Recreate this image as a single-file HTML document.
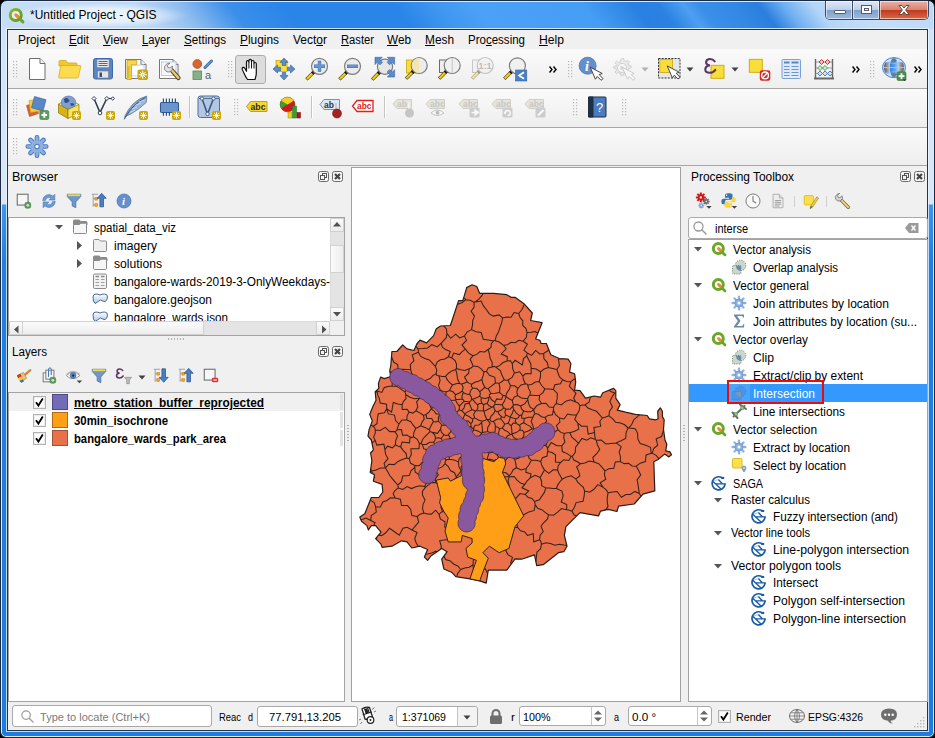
<!DOCTYPE html>
<html><head><meta charset="utf-8"><title>QGIS</title>
<style>
*{box-sizing:border-box;margin:0;padding:0}
html,body{width:935px;height:738px;overflow:hidden}
body{position:relative;font-family:"Liberation Sans",sans-serif;font-size:12px;color:#000;background:#000}
.abs{position:absolute}
#frame{left:0;top:0;width:935px;height:738px;border-radius:7px 7px 6px 6px;background:linear-gradient(#cfe2f6 0,#d8e7f8 203px,#3f95f0 204px,#1f7fe4 262px,#1c7ce2 100%);border:1px solid #1b2a40;box-shadow:inset 0 0 0 1px #d8ecfb}
#title{left:2px;top:2px;width:931px;height:27px;border-radius:5px 5px 0 0;background:linear-gradient(52deg,#c6ddf5 8.3px,#bfd9f5 118.6px,#8fbdf0 154.1px,#3a8fea 193.5px,#2a85e8 236.8px,#2a85e8 323.5px,#3f96f0 355.0px,#4ba1f6 386.6px,#469df4 473.2px,#2a80e0 512.6px,#2b82e2 532.3px,#4d9ff2 552.0px,#3a8fe8 563.9px,#3388e4 591.4px,#2a7edd 611.1px,#6fb0f2 630.8px,#b4d5f7 654.5px,#c4def8 693.9px,#bcd9f6 741.9px)}
#glow{left:8px;top:3px;width:180px;height:25px;background:radial-gradient(closest-side,rgba(255,255,255,.8) 0%,rgba(255,255,255,.6) 55%,rgba(255,255,255,0) 100%)}
#client{left:7px;top:29px;width:921px;height:702px;background:#f0f0f0;border:1px solid #26344a;box-shadow:0 0 0 1px rgba(235,245,255,.8)}
.t{position:absolute;white-space:nowrap;line-height:14px;transform-origin:0 50%}
.hd{width:5px;height:17px;background-image:radial-gradient(circle at 1px 1px,#b8b8b8 0.9px,transparent 1.1px);background-size:3px 3px}
#capbtns{left:825px;top:1px;width:104px;height:19px;border:1px solid #3a4a63;border-top:none;border-radius:0 0 5px 5px;overflow:hidden;display:flex}
.cb{height:18px;position:relative;border-right:1px solid #3a4a63;box-shadow:inset 0 0 0 1px rgba(255,255,255,.55)}
.cb.mn,.cb.mx{width:27px;background:linear-gradient(#dfe9f6 0%,#bccfe8 48%,#7f9fca 52%,#9dbbe0 100%)}
.cb.cl{width:48px;border-right:none;background:linear-gradient(#e9b2a5 0%,#d9836f 48%,#c13a1f 52%,#d96a44 100%)}
.cb.mn i{position:absolute;left:8px;top:9px;width:12px;height:4px;background:#fff;border:1px solid #535c6c;border-radius:1px}
.cb.mx i{position:absolute;left:8px;top:4px;width:11px;height:9px;border:1px solid #535c6c;background:#fff;box-shadow:inset 0 0 0 2px #fff,inset 0 0 0 3px #535c6c}
.cb.cl svg{position:absolute;left:17px;top:3px}
.sbv{width:14px;background:#e4e4e4;border-left:1px solid #dcdcdc}
.sbh{height:14px;background:#e4e4e4;border-top:1px solid #dcdcdc}
.sbb{position:absolute;width:14px;height:14px;background:linear-gradient(#fafafa,#ececec);border:1px solid #d0d0d0}
.sbv .sbb{left:-1px}.sbh .sbb{top:-1px}
.sbt{position:absolute;left:-1px;width:14px;background:linear-gradient(90deg,#fbfbfb,#ededed);border:1px solid #d2d2d2}
.sbt2{position:absolute;top:-1px;height:14px;background:linear-gradient(#fbfbfb,#ededed);border:1px solid #d2d2d2}
u{text-decoration:underline}
#t1{transform:scaleX(0.9983)}
#t2{transform:scaleX(0.9900)}
#t3{transform:scaleX(0.9660)}
#t4{transform:scaleX(0.9685)}
#t5{transform:scaleX(0.9324)}
#t6{transform:scaleX(0.9683)}
#t7{transform:scaleX(0.9905)}
#t8{transform:scaleX(0.9986)}
#t9{transform:scaleX(0.9333)}
#t10{transform:scaleX(0.9808)}
#t11{transform:scaleX(0.9878)}
#t12{transform:scaleX(0.9600)}
#t13{transform:scaleX(1.0127)}
#t14{transform:scaleX(1.0451)}
#t15{transform:scaleX(0.9528)}
#t16{transform:scaleX(1.0073)}
#t17{transform:scaleX(1.0132)}
#t18{transform:scaleX(0.9853)}
#t19{transform:scaleX(0.9924)}
#t20{transform:scaleX(0.9709)}
#t21{transform:scaleX(0.9714)}
#t22{transform:scaleX(0.9893)}
#t23{transform:scaleX(0.9524)}
#t24{transform:scaleX(0.9377)}
#t25{transform:scaleX(0.9919)}
#t26{transform:scaleX(0.9159)}
#t27{transform:scaleX(0.9663)}
#t28{transform:scaleX(0.9581)}
#t29{transform:scaleX(0.9820)}
#t30{transform:scaleX(1.0043)}
#t31{transform:scaleX(0.9914)}
#t32{transform:scaleX(0.9862)}
#t33{transform:scaleX(1.0159)}
#t34{transform:scaleX(0.9935)}
#t35{transform:scaleX(0.9992)}
#t36{transform:scaleX(0.9851)}
#t37{transform:scaleX(0.9915)}
#t38{transform:scaleX(0.9893)}
#t39{transform:scaleX(0.9887)}
#t40{transform:scaleX(0.8993)}
#t41{transform:scaleX(0.9630)}
#t42{transform:scaleX(0.9761)}
#t43{transform:scaleX(0.9325)}
#t44{transform:scaleX(1.0193)}
#t45{transform:scaleX(1.0178)}
#t46{transform:scaleX(0.9776)}
#t47{transform:scaleX(1.0097)}
#t48{transform:scaleX(1.0172)}
#t49{transform:scaleX(1.0023)}
#t50{transform:scaleX(0.8564)}
#t51{transform:scaleX(0.8163)}
#t52{transform:scaleX(1.0233)}
#t53{transform:scaleX(0.6531)}
#t54{transform:scaleX(0.9588)}
#t55{transform:scaleX(1.0894)}
#t56{transform:scaleX(0.9808)}
#t57{transform:scaleX(0.8163)}
#t58{transform:scaleX(1.0637)}
#t59{transform:scaleX(0.9701)}
#t60{transform:scaleX(0.9467)}
</style></head><body>
<div id="frame" class="abs"></div>
<div id="title" class="abs"></div>
<div id="glow" class="abs"></div>
<div id="client" class="abs"></div>
<svg class="abs" style="left:7.5px;top:6.5px;overflow:visible" width="17" height="17" viewBox="0 0 16 16"><defs><linearGradient id="qg" x1="0" y1="0" x2="1" y2="1"><stop offset="0" stop-color="#8ab82a"/><stop offset="1" stop-color="#5f9a1a"/></linearGradient></defs><circle cx="7.300" cy="7.500" r="5.200" fill="#e4eef8" stroke="url(#qg)" stroke-width="2.800"/><path d="M8 8l6 6" stroke="#6aa428" stroke-width="2.800" stroke-linecap="round"/><path d="M7.300 7.300l2.200 2.200" stroke="#ee8a2a" stroke-width="2.600" stroke-linecap="round"/></svg>
<span id="t1" class="t" style="left:29.5px;top:8.0px;font-size:12px;">*Untitled Project - QGIS</span>
<div class="abs" id="capbtns"><div class="cb mn"><i></i></div><div class="cb mx"><i></i></div><div class="cb cl"><svg width="14" height="12" viewBox="0 0 14 12"><path d="M2 1.5h3l2 2.6 2-2.6h3L8.6 6 12 10.5H9L7 7.9 5 10.5H2L5.4 6z" fill="#fff" stroke="#53403c" stroke-width="0.9"/></svg></div></div>
<span id="t2" class="t" style="left:18px;top:32.5px;font-size:12px;">Pro<u>j</u>ect</span>
<span id="t3" class="t" style="left:69px;top:32.5px;font-size:12px;"><u>E</u>dit</span>
<span id="t4" class="t" style="left:103px;top:32.5px;font-size:12px;"><u>V</u>iew</span>
<span id="t5" class="t" style="left:142px;top:32.5px;font-size:12px;"><u>L</u>ayer</span>
<span id="t6" class="t" style="left:184px;top:32.5px;font-size:12px;"><u>S</u>ettings</span>
<span id="t7" class="t" style="left:240px;top:32.5px;font-size:12px;"><u>P</u>lugins</span>
<span id="t8" class="t" style="left:293px;top:32.5px;font-size:12px;">Vect<u>o</u>r</span>
<span id="t9" class="t" style="left:341px;top:32.5px;font-size:12px;"><u>R</u>aster</span>
<span id="t10" class="t" style="left:387px;top:32.5px;font-size:12px;"><u>W</u>eb</span>
<span id="t11" class="t" style="left:425px;top:32.5px;font-size:12px;"><u>M</u>esh</span>
<span id="t12" class="t" style="left:468px;top:32.5px;font-size:12px;">Pro<u>c</u>essing</span>
<span id="t13" class="t" style="left:539px;top:32.5px;font-size:12px;"><u>H</u>elp</span>
<div class="abs" style="left:8px;top:49px;width:919px;height:1px;background:#fafafa"></div>
<div class="abs" style="left:8px;top:50px;width:919px;height:38px;background:linear-gradient(#fafafa,#eeeeee)"></div>
<div class="abs" style="left:8px;top:89px;width:919px;height:38px;background:linear-gradient(#fafafa,#eeeeee)"></div>
<div class="abs" style="left:8px;top:128px;width:919px;height:37px;background:linear-gradient(#fafafa,#eeeeee)"></div>
<div class="abs" style="left:8px;top:88px;width:919px;height:1px;background:#a6a6a6"></div>
<div class="abs" style="left:8px;top:127px;width:919px;height:1px;background:#a6a6a6"></div>
<div class="abs" style="left:8px;top:165px;width:919px;height:1px;background:#a6a6a6"></div>
<svg class="abs" style="left:13px;top:61px" width="5" height="17" viewBox="0 0 5 17"><g fill="#b9b9b9"><rect x="0" y="0" width="1.2" height="1.2"/><rect x="0" y="3" width="1.2" height="1.2"/><rect x="0" y="6" width="1.2" height="1.2"/><rect x="0" y="9" width="1.2" height="1.2"/><rect x="0" y="12" width="1.2" height="1.2"/><rect x="0" y="15" width="1.2" height="1.2"/><rect x="3" y="0" width="1.2" height="1.2"/><rect x="3" y="3" width="1.2" height="1.2"/><rect x="3" y="6" width="1.2" height="1.2"/><rect x="3" y="9" width="1.2" height="1.2"/><rect x="3" y="12" width="1.2" height="1.2"/><rect x="3" y="15" width="1.2" height="1.2"/></g></svg>
<svg class="abs" style="left:25.0px;top:57.0px;overflow:visible" width="24" height="24" viewBox="0 0 24 24"><path d="M4.5 1.5h10.5l5 5v16h-15.500z" fill="#fff" stroke="#6e6e6e"/><path d="M15 1.5v5h5" fill="#f2f2f2" stroke="#6e6e6e"/></svg>
<svg class="abs" style="left:57.0px;top:57.0px;overflow:visible" width="24" height="24" viewBox="0 0 24 24"><path d="M2 4.500q0-1 1-1h6l2 2.500h8q1 0 1 1v2H2z" fill="#f0c830" stroke="#d4a910" stroke-width=".8"/><path d="M3.800 8.500h19.200q1 0 .8 1L21.300 20q-.2 1-1.200 1H2.500q-1 0-.8-1z" fill="#fcdb4e" stroke="#d9ae18" stroke-width=".8"/></svg>
<svg class="abs" style="left:91.0px;top:57.0px;overflow:visible" width="24" height="24" viewBox="0 0 24 24"><rect x="2.500" y="1.500" width="19" height="20.500" rx="2" fill="#5b86c4" stroke="#3b6aae"/><rect x="6" y="2.500" width="12" height="8" fill="#e9e9e9" stroke="#8a8a8a" stroke-width=".6"/><path d="M7.500 4.500h9M7.500 6.500h9M7.500 8.500h9" stroke="#555" stroke-width=".9"/><rect x="6.500" y="14" width="11" height="7" fill="#e4e4e4" stroke="#777" stroke-width=".6"/><rect x="8.500" y="15.500" width="2.500" height="4.500" fill="#35507c"/></svg>
<svg class="abs" style="left:124.0px;top:57.0px;overflow:visible" width="24" height="24" viewBox="0 0 24 24"><path d="M1.500 2.500h15.500l5 5v14h-20.500z" fill="#fff" stroke="#777"/><path d="M17 2.500v5h5" fill="#eee" stroke="#777"/><path d="M7.500 8h12.500v11h-12.500z" fill="none" stroke="#c4d0f0" stroke-width="1"/><path d="M3 3.300h9.700v4.500h-5.400v14.700h-4.300z" fill="#f8d648" stroke="#c9a010" stroke-width=".8"/><path d="M3.500 10h2M3.500 12h2M3.500 14h2M3.500 16h2M3.500 18h2M3.500 20h2" stroke="#b08a08" stroke-width=".7"/><rect x="13.500" y="12.500" width="10.500" height="10.500" rx="2" fill="#c9a80c"/><circle cx="18.750" cy="17.750" r="1.600" fill="#fff"/><path d="M18.750 13.700v8.100M14.700 17.750h8.100M15.900 14.900l5.700 5.700M15.900 20.600l5.700-5.700" stroke="#fff" stroke-width="1"/><circle cx="18.750" cy="17.750" r=".700" fill="#c9a80c"/></svg>
<svg class="abs" style="left:157.0px;top:57.0px;overflow:visible" width="24" height="24" viewBox="0 0 24 24"><path d="M2.500 2.500h13.500l5 5v14h-18.500z" fill="#fff" stroke="#777"/><path d="M16 2.500v5h5" fill="#eee" stroke="#777"/><rect x="4.500" y="5" width="14.500" height="13.500" fill="#f6f8fe" stroke="#b9c5ee" stroke-width=".9"/><path d="M14.500 13L21.500 21" stroke="#4a4232" stroke-width="4.200" stroke-linecap="round"/><path d="M14.800 13.300L21.300 20.800" stroke="#e9cc72" stroke-width="2.500" stroke-linecap="round"/><path d="M8.600 8.200a4 4 0 1 0 6.800 2.600l.2-1.800-2.800 2-2-.7-.4-2.100 2.600-2a4 4 0 0 0-4.400 2z" fill="#e2e2e2" stroke="#707070" stroke-width=".8" stroke-linejoin="round"/></svg>
<svg class="abs" style="left:190.0px;top:57.0px;overflow:visible" width="24" height="24" viewBox="0 0 24 24"><circle cx="7.300" cy="7" r="4.400" fill="#d8642e" stroke="#a8441a" stroke-width=".7"/><path d="M15 10.500L21.500 4" stroke="#2f5f9a" stroke-width="3" stroke-linecap="round"/><path d="M15 10.500L21.500 4" stroke="#5b8fd0" stroke-width="1.800" stroke-linecap="round"/><rect x="3" y="14" width="8.500" height="8.500" fill="#86b086" stroke="#5a8a5a" stroke-width=".8"/><text x="15" y="22" font-family="Liberation Sans" font-size="11" fill="#5a5a5a">a</text></svg>
<svg class="abs" style="left:228px;top:61px" width="5" height="17" viewBox="0 0 5 17"><g fill="#b9b9b9"><rect x="0" y="0" width="1.2" height="1.2"/><rect x="0" y="3" width="1.2" height="1.2"/><rect x="0" y="6" width="1.2" height="1.2"/><rect x="0" y="9" width="1.2" height="1.2"/><rect x="0" y="12" width="1.2" height="1.2"/><rect x="0" y="15" width="1.2" height="1.2"/><rect x="3" y="0" width="1.2" height="1.2"/><rect x="3" y="3" width="1.2" height="1.2"/><rect x="3" y="6" width="1.2" height="1.2"/><rect x="3" y="9" width="1.2" height="1.2"/><rect x="3" y="12" width="1.2" height="1.2"/><rect x="3" y="15" width="1.2" height="1.2"/></g></svg>
<div class="abs" style="left:235px;top:55px;width:31px;height:29px;border:1px solid #adadad;background:#dddddd;border-radius:3px"></div>
<svg class="abs" style="left:239.0px;top:57.0px;overflow:visible" width="24" height="24" viewBox="0 0 24 24"><path d="M8.500 22.500q-1.800-2.400-3.500-6.300-1.300-2.800-1.700-3.800-.5-1.600.7-2 1-.3 1.900 1.100l1.600 2.800V5q0-1.400 1.200-1.400T9.900 5V3.700q0-1.400 1.300-1.400t1.300 1.400v1q.1-1.300 1.300-1.200t1.200 1.400v1.600q.2-1.100 1.200-1t1.100 1.300V16q0 2.600-.7 4.300l-.6 2.200z" fill="#fff" stroke="#111" stroke-width="1.200" stroke-linejoin="round"/><path d="M9.900 5v6.500M12.500 4.700V11.500M15 6.500v5" stroke="#111" stroke-width="1" fill="none"/></svg>
<svg class="abs" style="left:272.0px;top:57.0px;overflow:visible" width="24" height="24" viewBox="0 0 24 24"><rect x="4" y="3.500" width="11" height="11" fill="#f9de3a" stroke="#c9a60e" stroke-width=".8"/><g fill="#5e8cc8" stroke="#3568a8" stroke-width=".7" stroke-linejoin="round"><path d="M12 1l4 4.500h-2.300v3h-3.400v-3H8z"/><path d="M12 23l4-4.500h-2.300v-3h-3.400v3H8z"/><path d="M1 12l4.500-4v2.300h3v3.400h-3V16z"/><path d="M23 12l-4.500-4v2.300h-3v3.400h3V16z"/></g><rect x="9.800" y="9.800" width="4.400" height="4.400" fill="#f9de3a"/></svg>
<svg class="abs" style="left:305.0px;top:57.0px;overflow:visible" width="24" height="24" viewBox="0 0 24 24"><g opacity="1"><path d="M9.2 14.6L1.4 22.4" stroke="#4a3d10" stroke-width="3.4"/><path d="M9.2 14.6L7.2 16.6" stroke="#1a1a1a" stroke-width="3.4"/><path d="M7.2 16.6L1.8 22.0" stroke="#f6c917" stroke-width="2.3"/><circle cx="14.5" cy="9.3" r="8" fill="#ebebeb" stroke="#7d7d7d" stroke-width="1.2"/><path d="M14.500 3.800v11M9 9.300h11" stroke="#3f6fb0" stroke-width="3.400"/><path d="M14.500 4.300v10M9.500 9.300h10" stroke="#6a96d0" stroke-width="2.400"/></g></svg>
<svg class="abs" style="left:338.0px;top:57.0px;overflow:visible" width="24" height="24" viewBox="0 0 24 24"><g opacity="1"><path d="M9.2 14.6L1.4 22.4" stroke="#4a3d10" stroke-width="3.4"/><path d="M9.2 14.6L7.2 16.6" stroke="#1a1a1a" stroke-width="3.4"/><path d="M7.2 16.6L1.8 22.0" stroke="#f6c917" stroke-width="2.3"/><circle cx="14.5" cy="9.3" r="8" fill="#ebebeb" stroke="#7d7d7d" stroke-width="1.2"/><path d="M9 9.300h11" stroke="#3f6fb0" stroke-width="3.400"/><path d="M9.500 9.300h10" stroke="#6a96d0" stroke-width="2.400"/></g></svg>
<svg class="abs" style="left:371.0px;top:57.0px;overflow:visible" width="24" height="24" viewBox="0 0 24 24"><g opacity="1"><path d="M9.0 14.8L1.2 22.6" stroke="#4a3d10" stroke-width="3.4"/><path d="M9.0 14.8L7.0 16.8" stroke="#1a1a1a" stroke-width="3.4"/><path d="M7.0 16.8L1.6 22.2" stroke="#f6c917" stroke-width="2.3"/><circle cx="14" cy="9.8" r="7.6" fill="#e6e6e6" stroke="#7d7d7d" stroke-width="1.2"/></g><g fill="#5a8cce" stroke="#3465a4" stroke-width=".6" stroke-linejoin="round"><path d="M4 .3h7.300l-2.400 2.400 2.600 2.600-2.500 2.500-2.600-2.600L4 7.600z"/><path d="M23.600 .3h-7.300l2.400 2.400-2.600 2.600 2.500 2.500 2.600-2.600 2.400 2.400z"/><path d="M23.600 20h-7.300l2.400-2.400-2.600-2.600 2.500-2.500 2.600 2.600 2.400-2.400z"/></g></svg>
<svg class="abs" style="left:404.0px;top:57.0px;overflow:visible" width="24" height="24" viewBox="0 0 24 24"><rect x="2.500" y="3" width="11" height="13" fill="#f9de3a" stroke="#c9a60e" stroke-width=".8"/><g opacity="1"><path d="M9.9 13.8L2.1 21.6" stroke="#4a3d10" stroke-width="3.4"/><path d="M9.9 13.8L7.9 15.8" stroke="#1a1a1a" stroke-width="3.4"/><path d="M7.9 15.8L2.5 21.2" stroke="#f6c917" stroke-width="2.3"/><circle cx="15.2" cy="8.5" r="8" fill="#ececec" stroke="#7d7d7d" stroke-width="1.2"/><path d="M15.200 1.100a7.400 7.400 0 0 0 0 14.800z" fill="#f0e6b4"/></g></svg>
<svg class="abs" style="left:437.0px;top:57.0px;overflow:visible" width="24" height="24" viewBox="0 0 24 24"><rect x="2.500" y="3" width="10" height="12.500" fill="#ededed" stroke="#6a6a6a" stroke-width="1"/><g opacity="1"><path d="M9.9 13.8L2.1 21.6" stroke="#4a3d10" stroke-width="3.4"/><path d="M9.9 13.8L7.9 15.8" stroke="#1a1a1a" stroke-width="3.4"/><path d="M7.9 15.8L2.5 21.2" stroke="#f6c917" stroke-width="2.3"/><circle cx="15.2" cy="8.5" r="8" fill="#f0f0f0" stroke="#7d7d7d" stroke-width="1.2"/><path d="M15.200 1.500v14" stroke="#c4c4c4" stroke-width="1"/></g></svg>
<svg class="abs" style="left:470.0px;top:57.0px;overflow:visible" width="24" height="24" viewBox="0 0 24 24"><g opacity=".42"><rect x="2.500" y="3" width="10" height="12.500" fill="#eee" stroke="#888" stroke-width="1"/><g opacity="1"><path d="M9.9 13.8L2.1 21.6" stroke="#4a3d10" stroke-width="3.4"/><path d="M9.9 13.8L7.9 15.8" stroke="#1a1a1a" stroke-width="3.4"/><path d="M7.9 15.8L2.5 21.2" stroke="#f6c917" stroke-width="2.3"/><circle cx="15.2" cy="8.5" r="8" fill="#eee" stroke="#7d7d7d" stroke-width="1.2"/><text x="8.600" y="12" font-family="Liberation Sans" font-weight="bold" font-size="9.500" fill="#6a6a6a" textLength="13" lengthAdjust="spacingAndGlyphs">1:1</text></g></g></svg>
<svg class="abs" style="left:503.0px;top:57.0px;overflow:visible" width="24" height="24" viewBox="0 0 24 24"><g opacity="1"><path d="M9.1 14.1L1.3 21.9" stroke="#4a3d10" stroke-width="3.4"/><path d="M9.1 14.1L7.1 16.1" stroke="#1a1a1a" stroke-width="3.4"/><path d="M7.1 16.1L1.7 21.5" stroke="#f6c917" stroke-width="2.3"/><circle cx="14.4" cy="8.8" r="8" fill="#f0f0f0" stroke="#7d7d7d" stroke-width="1.2"/></g><rect x="12.500" y="13" width="11.300" height="11" fill="#4c7fc2" stroke="#3465a4" stroke-width=".6"/><path d="M21 15.200l-5 3.300 5 3.300" fill="none" stroke="#fff" stroke-width="1.700"/></svg>
<svg class="abs" style="left:549px;top:66px" width="9" height="7" viewBox="0 0 9 7"><path d="M0.5 0.5L3 3.5 0.5 6.5M4.5 0.5L7 3.5 4.5 6.5" fill="none" stroke="#000" stroke-width="1.4"/></svg>
<svg class="abs" style="left:568px;top:61px" width="5" height="17" viewBox="0 0 5 17"><g fill="#b9b9b9"><rect x="0" y="0" width="1.2" height="1.2"/><rect x="0" y="3" width="1.2" height="1.2"/><rect x="0" y="6" width="1.2" height="1.2"/><rect x="0" y="9" width="1.2" height="1.2"/><rect x="0" y="12" width="1.2" height="1.2"/><rect x="0" y="15" width="1.2" height="1.2"/><rect x="3" y="0" width="1.2" height="1.2"/><rect x="3" y="3" width="1.2" height="1.2"/><rect x="3" y="6" width="1.2" height="1.2"/><rect x="3" y="9" width="1.2" height="1.2"/><rect x="3" y="12" width="1.2" height="1.2"/><rect x="3" y="15" width="1.2" height="1.2"/></g></svg>
<svg class="abs" style="left:578.0px;top:57.0px;overflow:visible" width="24" height="24" viewBox="0 0 24 24"><circle cx="9.600" cy="8.700" r="8.500" fill="#6390cc" stroke="#4674b6" stroke-width=".8"/><text x="6.900" y="13.700" font-family="Liberation Serif" font-style="italic" font-weight="bold" font-size="14" fill="#fff">i</text><path d="M12.2 10.2L24.2 16.5L21.2 17.6L25.1 21.6L23.0 23.3L19.3 19.5L17.4 22.2z" fill="#fff" stroke="#333" stroke-width=".9" stroke-linejoin="round"/></svg>
<svg class="abs" style="left:611.0px;top:57.0px;overflow:visible" width="24" height="24" viewBox="0 0 24 24"><g opacity=".4"><path d="M11 1.500l1.700.1.600 2.300 1.600.7 2.100-1.200 1.300 1.300-1.200 2.100.7 1.600 2.300.6v1.900l-2.300.6-.7 1.600 1.200 2.100-1.300 1.300-2.100-1.200-1.600.7-.6 2.300H9.800l-.6-2.300-1.600-.7-2.100 1.200-1.300-1.300 1.200-2.100-.7-1.600-2.300-.6V9.900l2.300-.6.700-1.600-1.200-2.100L5.500 4.300l2.100 1.200 1.600-.7.600-2.300z" fill="#ddd" stroke="#999" stroke-width="1"/><circle cx="11" cy="10.900" r="4.600" fill="#f4f4f4" stroke="#999"/><path d="M9.500 8.500v4.800l4-2.400z" fill="#aaa"/><path d="M11.2 10.2L23.2 16.5L20.2 17.6L24.1 21.6L22.0 23.3L18.3 19.5L16.4 22.2z" fill="#fff" stroke="#888" stroke-width=".9" stroke-linejoin="round"/></g></svg>
<svg class="abs" style="left:641px;top:67px" width="8" height="5" viewBox="0 0 8 5"><path d="M0.5 0.5h7L4 4.5z" fill="#b0b0b0"/></svg>
<svg class="abs" style="left:657.0px;top:57.0px;overflow:visible" width="24" height="24" viewBox="0 0 24 24"><rect x="1.500" y="1.500" width="21.500" height="19.500" fill="#e6e6e6" stroke="#333" stroke-width="1" stroke-dasharray="2 1.200"/><rect x="2.800" y="2.600" width="12.800" height="12.800" fill="#f9de3a" stroke="#c9a60e" stroke-width=".8"/><path d="M10.2 8.9L22.2 15.2L19.2 16.3L23.1 20.3L21.0 22.0L17.3 18.2L15.4 20.9z" fill="#fff" stroke="#333" stroke-width=".9" stroke-linejoin="round"/></svg>
<svg class="abs" style="left:686px;top:67px" width="8" height="5" viewBox="0 0 8 5"><path d="M0.5 0.5h7L4 4.5z" fill="#404040"/></svg>
<svg class="abs" style="left:701.0px;top:57.0px;overflow:visible" width="24" height="24" viewBox="0 0 24 24"><rect x="10" y="8.300" width="13" height="13" fill="#f9de3a" stroke="#c9a60e" stroke-width=".9"/><path transform="translate(2.300 -.5)" d="M11.500 4.800Q9.500 2.300 6.300 2.500 2.800 2.900 2.800 5.800 2.800 8.500 6.500 8.900 2 9.500 2 13 2 16.300 6.500 16.300 10 16.300 12 13.300" fill="none" stroke="#5c3566" stroke-width="2.100" stroke-linecap="round"/></svg>
<svg class="abs" style="left:731px;top:67px" width="8" height="5" viewBox="0 0 8 5"><path d="M0.5 0.5h7L4 4.5z" fill="#404040"/></svg>
<svg class="abs" style="left:746.0px;top:57.0px;overflow:visible" width="24" height="24" viewBox="0 0 24 24"><rect x="3.300" y="2.300" width="13" height="13" fill="#f9de3a" stroke="#c9a60e" stroke-width=".9"/><rect x="13.800" y="13.200" width="10.500" height="10.500" rx="2" fill="#d42a2a"/><circle cx="19" cy="18.450" r="3.400" fill="none" stroke="#fff" stroke-width="1.400"/><path d="M16.700 20.700l4.600-4.600" stroke="#fff" stroke-width="1.400"/></svg>
<svg class="abs" style="left:779.0px;top:57.0px;overflow:visible" width="24" height="24" viewBox="0 0 24 24"><rect x="3" y="2.500" width="18.500" height="19" rx="1" fill="#dfeaf8" stroke="#7ba0d4" stroke-width="1"/><path d="M5 5.500h5.500M12.500 5.500h7" stroke="#5886c6" stroke-width="2.200"/><path d="M5 9.500h5.500M12.500 9.500h7M5 12.500h5.500M12.500 12.500h7M5 15.500h5.500M12.500 15.500h7M5 18.500h5.500M12.500 18.500h7" stroke="#6a96d2" stroke-width="1.200"/></svg>
<svg class="abs" style="left:812.0px;top:57.0px;overflow:visible" width="24" height="24" viewBox="0 0 24 24"><path d="M3.500 2v19M20.500 2v19" stroke="#666" stroke-width="1.400"/><path d="M2 21.500h20" stroke="#666" stroke-width="2"/><path d="M3.500 5h17M3.500 11h17M3.500 16.500h17" stroke="#888" stroke-width=".8"/><g stroke-width=".9"><path d="M9.500 2.500l2.500 2.500-2.500 2.500L7 5zM15.500 2.500L18 5l-2.500 2.500L13 5z" fill="#f1c4c4" stroke="#c02020"/><path d="M8 8.500l2.500 2.500L8 13.500 5.500 11zM13 8.500l2.500 2.500-2.500 2.500-2.500-2.500z" fill="#cfe8cf" stroke="#4a9a4a"/><path d="M8 14l2.500 2.500L8 19l-2.500-2.500zM13 14l2.500 2.500L13 19l-2.500-2.500zM18 14l2.500 2.500L18 19l-2.500-2.500z" fill="#cfdff2" stroke="#3f74b8"/></g></svg>
<svg class="abs" style="left:852px;top:66px" width="9" height="7" viewBox="0 0 9 7"><path d="M0.5 0.5L3 3.5 0.5 6.5M4.5 0.5L7 3.5 4.5 6.5" fill="none" stroke="#000" stroke-width="1.4"/></svg>
<svg class="abs" style="left:870px;top:61px" width="5" height="17" viewBox="0 0 5 17"><g fill="#b9b9b9"><rect x="0" y="0" width="1.2" height="1.2"/><rect x="0" y="3" width="1.2" height="1.2"/><rect x="0" y="6" width="1.2" height="1.2"/><rect x="0" y="9" width="1.2" height="1.2"/><rect x="0" y="12" width="1.2" height="1.2"/><rect x="0" y="15" width="1.2" height="1.2"/><rect x="3" y="0" width="1.2" height="1.2"/><rect x="3" y="3" width="1.2" height="1.2"/><rect x="3" y="6" width="1.2" height="1.2"/><rect x="3" y="9" width="1.2" height="1.2"/><rect x="3" y="12" width="1.2" height="1.2"/><rect x="3" y="15" width="1.2" height="1.2"/></g></svg>
<svg class="abs" style="left:882.0px;top:57.0px;overflow:visible" width="24" height="24" viewBox="0 0 24 24"><defs><linearGradient id="gb" x1="0" x2="1"><stop offset="0" stop-color="#2f7fe0"/><stop offset=".6" stop-color="#5aa4ee"/><stop offset="1" stop-color="#a9d0f8"/></linearGradient><linearGradient id="gg" x1="0" x2="1"><stop offset="0" stop-color="#5a5a5a"/><stop offset="1" stop-color="#c8c8c8"/></linearGradient><linearGradient id="gh" x1="1" x2="0"><stop offset="0" stop-color="#5a5a5a"/><stop offset="1" stop-color="#c8c8c8"/></linearGradient></defs><ellipse cx="12" cy="10.600" rx="11.500" ry="10" fill="#cfe3fa" stroke="#3d7fd6" stroke-width="1"/><ellipse cx="12" cy="10.600" rx="4.300" ry="9.800" fill="url(#gb)"/><path d="M3 5.500Q5.500 4.300 8 4.800Q6.800 10.600 8 16.400Q5.500 16.900 3 15.700Q1 10.600 3 5.500z" fill="url(#gg)"/><path d="M21 5.500Q18.500 4.300 16 4.800Q17.200 10.600 16 16.400Q18.500 16.900 21 15.700Q23 10.600 21 5.500z" fill="url(#gh)"/><path d="M9.300 3.500Q12 -.5 14.700 3.500L13.800 5h-3.600zM9.300 17.700Q12 21.700 14.700 17.700L13.800 16.200h-3.600z" fill="#787878"/><path d="M.6 10.600h22.800" stroke="#a4caf6" stroke-width="1"/><path d="M2.500 5.200Q12 8 21.500 5.200M2.500 16Q12 13.200 21.500 16" fill="none" stroke="#8fbdf2" stroke-width=".6"/><rect x="15" y="14.800" width="9" height="8.700" rx="1.500" fill="#4f8f4f" stroke="#356c35" stroke-width=".6"/><path d="M19.500 16.300v5.700M16.600 19.100h5.800" stroke="#fff" stroke-width="1.800"/><path d="M20.500 22.500h4l-2 1.500z" fill="#2c2c2c"/></svg>
<svg class="abs" style="left:914px;top:66px" width="9" height="7" viewBox="0 0 9 7"><path d="M0.5 0.5L3 3.5 0.5 6.5M4.5 0.5L7 3.5 4.5 6.5" fill="none" stroke="#000" stroke-width="1.4"/></svg>
<svg class="abs" style="left:13px;top:99px" width="5" height="17" viewBox="0 0 5 17"><g fill="#b9b9b9"><rect x="0" y="0" width="1.2" height="1.2"/><rect x="0" y="3" width="1.2" height="1.2"/><rect x="0" y="6" width="1.2" height="1.2"/><rect x="0" y="9" width="1.2" height="1.2"/><rect x="0" y="12" width="1.2" height="1.2"/><rect x="0" y="15" width="1.2" height="1.2"/><rect x="3" y="0" width="1.2" height="1.2"/><rect x="3" y="3" width="1.2" height="1.2"/><rect x="3" y="6" width="1.2" height="1.2"/><rect x="3" y="9" width="1.2" height="1.2"/><rect x="3" y="12" width="1.2" height="1.2"/><rect x="3" y="15" width="1.2" height="1.2"/></g></svg>
<svg class="abs" style="left:25.0px;top:95.0px;overflow:visible" width="24" height="24" viewBox="0 0 24 24"><path d="M1.500 10.500l9-3 3 11-9 3z" fill="#d4623a" stroke="#a8482a" stroke-width=".6"/><path d="M4 5.500l10-1.500 1.500 12-10 1.500z" fill="#f4cc3a" stroke="#c9a010" stroke-width=".6"/><path d="M9.500 1.500l11.500 3.300L18 16 6.500 12.700z" fill="#5b88c4" stroke="#3b68a8" stroke-width=".7"/><rect x="14.800" y="15.500" width="9" height="9" rx="1.500" fill="#5e9a5e" stroke="#3f7a3f" stroke-width=".6"/><path d="M19.300 17.200v5.600M16.500 20h5.600" stroke="#fff" stroke-width="1.900"/></svg>
<svg class="abs" style="left:57.0px;top:95.0px;overflow:visible" width="24" height="24" viewBox="0 0 24 24"><ellipse cx="11.500" cy="7.500" rx="7.300" ry="6.500" fill="#7ea0d0" stroke="#4a6ea8" stroke-width=".6"/><path d="M7 4q2-1.500 4-.5l1.500 2.500-2.500 2-2.500-.5zM13 8.500l3-.5 1.500 2-3 1z" fill="#2f4f86"/><path d="M1.500 9l9.500 5.500v9L1.500 18z" fill="#d9b310" stroke="#8a7208" stroke-width=".7"/><path d="M11 14.500L22 9.500v8.500L11 23.500z" fill="#fbe45a" stroke="#8a7208" stroke-width=".7"/><path d="M1.500 9l3.500-1.600M22 9.500l-3.500-1.600" stroke="#8a7208" stroke-width=".7"/><rect x="15" y="16" width="9" height="9" rx="2" fill="#c9a80c"/><path d="M16.17 20.50L22.83 20.50M17.15 18.15L21.85 22.85M19.50 17.17L19.50 23.83M21.85 18.15L17.15 22.85" stroke="#fff" stroke-width="0.85"/></svg>
<svg class="abs" style="left:91.0px;top:95.0px;overflow:visible" width="24" height="24" viewBox="0 0 24 24"><path d="M3 3.500L9 17.500 15.800 3.500" fill="none" stroke="#2d3f55" stroke-width="1.600"/><path d="M15.800 3.500h5.500" stroke="#2d3f55" stroke-width="1.200"/><g fill="#fff" stroke="#2d3f55" stroke-width="1"><path d="M3 1.500l2 2-2 2-2-2zM15.800 1.500l2 2-2 2-2-2zM21.800 1.800l1.700 1.700-1.700 1.700-1.700-1.700z"/><circle cx="9" cy="18" r="1.800"/></g><rect x="15" y="16" width="9" height="9" rx="2" fill="#c9a80c"/><path d="M16.17 20.50L22.83 20.50M17.15 18.15L21.85 22.85M19.50 17.17L19.50 23.83M21.85 18.15L17.15 22.85" stroke="#fff" stroke-width="0.85"/></svg>
<svg class="abs" style="left:124.0px;top:95.0px;overflow:visible" width="24" height="24" viewBox="0 0 24 24"><defs><linearGradient id="fg" x1="0" y1="0" x2="1" y2="1"><stop offset="0" stop-color="#6388bd"/><stop offset=".55" stop-color="#9db6d8"/><stop offset="1" stop-color="#c9d7ea"/></linearGradient></defs><path d="M22.600 1.100Q15 3 9 9 3.500 15 1.200 20.500L.3 24.300 2.400 21Q4 20 6 19.500 15 14.500 22.200 7.500 23 4 22.600 1.100z" fill="url(#fg)" stroke="#47689c" stroke-width=".7" stroke-linejoin="round"/><path d="M21.500 2.500Q9 9 1 22.500" fill="none" stroke="#34507e" stroke-width="1"/><path d="M8 14l5-2M11 10.500l6-2.500M6 17.500l5-2.300M15 7l5.500-2" stroke="#e4ecf6" stroke-width=".7"/><rect x="15" y="16" width="9" height="9" rx="2" fill="#c9a80c"/><path d="M16.17 20.50L22.83 20.50M17.15 18.15L21.85 22.85M19.50 17.17L19.50 23.83M21.85 18.15L17.15 22.85" stroke="#fff" stroke-width="0.85"/></svg>
<svg class="abs" style="left:157.0px;top:95.0px;overflow:visible" width="24" height="24" viewBox="0 0 24 24"><rect x="3.500" y="7.500" width="18" height="10" rx="1.200" fill="#6a94cc" stroke="#2f5a94" stroke-width="1.100"/><path d="M6.400 3.500v4M9.400 3.500v4M12.400 3.500v4M15.400 3.500v4M18.400 3.500v4M6.400 17.500v3.300M9.400 17.500v3.300M12.400 17.500v3.300" stroke="#2d4f80" stroke-width="1.200"/><rect x="15" y="16" width="9" height="9" rx="2" fill="#c9a80c"/><path d="M16.17 20.50L22.83 20.50M17.15 18.15L21.85 22.85M19.50 17.17L19.50 23.83M21.85 18.15L17.15 22.85" stroke="#fff" stroke-width="0.85"/></svg>
<div class="abs" style="left:189px;top:96px;width:1px;height:22px;background:#c4c4c4"></div>
<div class="abs" style="left:190px;top:96px;width:1px;height:22px;background:#fff"></div>
<svg class="abs" style="left:197.0px;top:95.0px;overflow:visible" width="24" height="24" viewBox="0 0 24 24"><rect x="1" y="1" width="21.500" height="21.500" rx="2.500" fill="#b3c6e2" stroke="#4f6f9f" stroke-width="1"/><path d="M5 3.500l5.500 15.500 6-15.500" fill="none" stroke="#3a5580" stroke-width="1.500"/><path d="M2 3.500h20" stroke="#3a5580" stroke-width=".8"/><g fill="#fff" stroke="#3a5580" stroke-width=".9"><circle cx="5" cy="3.500" r="1.600"/><circle cx="16.500" cy="3.500" r="1.600"/><circle cx="10.500" cy="19" r="1.700"/></g><rect x="15" y="16" width="9" height="9" rx="2" fill="#c9a80c"/><path d="M16.17 20.50L22.83 20.50M17.15 18.15L21.85 22.85M19.50 17.17L19.50 23.83M21.85 18.15L17.15 22.85" stroke="#fff" stroke-width="0.85"/></svg>
<svg class="abs" style="left:234px;top:99px" width="5" height="17" viewBox="0 0 5 17"><g fill="#b9b9b9"><rect x="0" y="0" width="1.2" height="1.2"/><rect x="0" y="3" width="1.2" height="1.2"/><rect x="0" y="6" width="1.2" height="1.2"/><rect x="0" y="9" width="1.2" height="1.2"/><rect x="0" y="12" width="1.2" height="1.2"/><rect x="0" y="15" width="1.2" height="1.2"/><rect x="3" y="0" width="1.2" height="1.2"/><rect x="3" y="3" width="1.2" height="1.2"/><rect x="3" y="6" width="1.2" height="1.2"/><rect x="3" y="9" width="1.2" height="1.2"/><rect x="3" y="12" width="1.2" height="1.2"/><rect x="3" y="15" width="1.2" height="1.2"/></g></svg>
<svg class="abs" style="left:245.0px;top:95.0px;overflow:visible" width="24" height="24" viewBox="0 0 24 24"><path d="M5.500 6.500h16.500v10H5.500L1.500 11.500z" fill="#f4d730" stroke="#b89a0a" stroke-width=".9"/><text x="5.500" y="14.500" font-family="Liberation Sans" font-weight="bold" font-size="8.500" fill="#2b2b2b" textLength="15" lengthAdjust="spacingAndGlyphs">abc</text></svg>
<svg class="abs" style="left:278.0px;top:95.0px;overflow:visible" width="24" height="24" viewBox="0 0 24 24"><circle cx="9.500" cy="9.500" r="7.300" fill="#d21919" stroke="#8a1010" stroke-width=".6"/><path d="M9.500 9.500V2.200A7.300 7.300 0 0 0 3.200 13.200z" fill="#32a232"/><path d="M9.500 9.500L3.300 5.700A7.300 7.300 0 0 1 15.700 5.700z" fill="#f4cf1a"/><rect x="10" y="17" width="4" height="6" fill="#f4cf1a" stroke="#a88a08" stroke-width=".5"/><rect x="14.500" y="11" width="4" height="12" fill="#32a232" stroke="#1f6f1f" stroke-width=".5"/><rect x="19" y="17.500" width="3.500" height="5.500" fill="#b51515" stroke="#7a0c0c" stroke-width=".5"/></svg>
<div class="abs" style="left:311px;top:96px;width:1px;height:22px;background:#c4c4c4"></div>
<div class="abs" style="left:312px;top:96px;width:1px;height:22px;background:#fff"></div>
<svg class="abs" style="left:318.0px;top:95.0px;overflow:visible" width="24" height="24" viewBox="0 0 24 24"><path d="M6 4.500h15.500v10H6L2 9.500z" fill="#dbe7f6" stroke="#5a88c4" stroke-width=".9"/><text x="6" y="12.800" font-family="Liberation Sans" font-weight="bold" font-size="8.500" fill="#333">ab</text><path d="M18 8v8" stroke="#ccc" stroke-width="2"/><circle cx="19" cy="18.500" r="4.500" fill="#a52222" stroke="#7a1414" stroke-width=".6"/></svg>
<svg class="abs" style="left:351.0px;top:95.0px;overflow:visible" width="24" height="24" viewBox="0 0 24 24"><path d="M6 5.500h16v11H6L1.500 11z" fill="#fff" stroke="#e02020" stroke-width="1.300"/><text x="6" y="14.200" font-family="Liberation Sans" font-weight="bold" font-size="8.500" fill="#e02020" textLength="14.500" lengthAdjust="spacingAndGlyphs">abc</text></svg>
<div class="abs" style="left:384px;top:96px;width:1px;height:22px;background:#c4c4c4"></div>
<div class="abs" style="left:385px;top:96px;width:1px;height:22px;background:#fff"></div>
<svg class="abs" style="left:391.0px;top:95.0px;overflow:visible" width="24" height="24" viewBox="0 0 24 24"><g opacity=".5"><path d="M6 4.500h14.500v9H6L2 9z" fill="#d8d5c0" stroke="#a8a48c" stroke-width=".9"/><text x="6" y="12" font-family="Liberation Sans" font-weight="bold" font-size="8.500" fill="#999">ab</text><path d="M18 7v8" stroke="#eee" stroke-width="2"/><circle cx="18.500" cy="18" r="4.500" fill="#999"/></g></svg>
<svg class="abs" style="left:424.0px;top:95.0px;overflow:visible" width="24" height="24" viewBox="0 0 24 24"><g opacity=".5"><path d="M6 4.500h14.500v9H6L2 9z" fill="#d8d5c0" stroke="#a8a48c" stroke-width=".9"/><text x="6" y="12" font-family="Liberation Sans" font-weight="bold" font-size="8.500" fill="#999">abc</text><path d="M7 18q6-6 13 0-7 5-13 0z" fill="#fff" stroke="#888" stroke-width=".9"/><circle cx="13.500" cy="17.800" r="2" fill="#888"/></g></svg>
<svg class="abs" style="left:457.0px;top:95.0px;overflow:visible" width="24" height="24" viewBox="0 0 24 24"><g opacity=".5"><path d="M6 4.500h14.500v9H6L2 9z" fill="#d8d5c0" stroke="#a8a48c" stroke-width=".9"/><text x="6" y="12" font-family="Liberation Sans" font-weight="bold" font-size="8.500" fill="#999">abc</text><rect x="12.500" y="12.500" width="10" height="10" rx="1.500" fill="#a8a8a8"/><path d="M14.500 17.500h3.500v-2.500l3.500 2.500-3.500 2.500v-2.500" fill="#fff" stroke="#fff" stroke-width="1.400"/></g></svg>
<svg class="abs" style="left:490.0px;top:95.0px;overflow:visible" width="24" height="24" viewBox="0 0 24 24"><g opacity=".5"><path d="M6 4.500h14.500v9H6L2 9z" fill="#d8d5c0" stroke="#a8a48c" stroke-width=".9"/><text x="6" y="12" font-family="Liberation Sans" font-weight="bold" font-size="8.500" fill="#999">abc</text><rect x="12.500" y="12.500" width="10" height="10" rx="1.500" fill="#a8a8a8"/><path d="M15 18a2.600 2.600 0 1 1 2.600 2.600" fill="none" stroke="#fff" stroke-width="1.500"/><path d="M13.500 17.500h3.200l-1.600 2.300z" fill="#fff"/></g></svg>
<svg class="abs" style="left:523.0px;top:95.0px;overflow:visible" width="24" height="24" viewBox="0 0 24 24"><g opacity=".5"><path d="M6 4.500h14.500v9H6L2 9z" fill="#d8d5c0" stroke="#a8a48c" stroke-width=".9"/><text x="6" y="12" font-family="Liberation Sans" font-weight="bold" font-size="8.500" fill="#999">abc</text><rect x="12.500" y="12.500" width="10" height="10" rx="1.500" fill="#a8a8a8"/><path d="M15 20.500l5.500-5.500" stroke="#fff" stroke-width="2.200"/></g></svg>
<svg class="abs" style="left:573px;top:99px" width="5" height="17" viewBox="0 0 5 17"><g fill="#b9b9b9"><rect x="0" y="0" width="1.2" height="1.2"/><rect x="0" y="3" width="1.2" height="1.2"/><rect x="0" y="6" width="1.2" height="1.2"/><rect x="0" y="9" width="1.2" height="1.2"/><rect x="0" y="12" width="1.2" height="1.2"/><rect x="0" y="15" width="1.2" height="1.2"/><rect x="3" y="0" width="1.2" height="1.2"/><rect x="3" y="3" width="1.2" height="1.2"/><rect x="3" y="6" width="1.2" height="1.2"/><rect x="3" y="9" width="1.2" height="1.2"/><rect x="3" y="12" width="1.2" height="1.2"/><rect x="3" y="15" width="1.2" height="1.2"/></g></svg>
<svg class="abs" style="left:585.0px;top:95.0px;overflow:visible" width="24" height="24" viewBox="0 0 24 24"><rect x="3.500" y="2" width="17.500" height="20" rx="1" fill="#4a7cc0" stroke="#1f2f45" stroke-width="1"/><rect x="3" y="1.500" width="5.500" height="21" rx="1" fill="#1f2f45"/><text x="11" y="17" font-family="Liberation Sans" font-size="13" fill="#fff">?</text></svg>
<svg class="abs" style="left:622px;top:99px" width="5" height="17" viewBox="0 0 5 17"><g fill="#b9b9b9"><rect x="0" y="0" width="1.2" height="1.2"/><rect x="0" y="3" width="1.2" height="1.2"/><rect x="0" y="6" width="1.2" height="1.2"/><rect x="0" y="9" width="1.2" height="1.2"/><rect x="0" y="12" width="1.2" height="1.2"/><rect x="0" y="15" width="1.2" height="1.2"/><rect x="3" y="0" width="1.2" height="1.2"/><rect x="3" y="3" width="1.2" height="1.2"/><rect x="3" y="6" width="1.2" height="1.2"/><rect x="3" y="9" width="1.2" height="1.2"/><rect x="3" y="12" width="1.2" height="1.2"/><rect x="3" y="15" width="1.2" height="1.2"/></g></svg>
<svg class="abs" style="left:13px;top:138px" width="5" height="17" viewBox="0 0 5 17"><g fill="#b9b9b9"><rect x="0" y="0" width="1.2" height="1.2"/><rect x="0" y="3" width="1.2" height="1.2"/><rect x="0" y="6" width="1.2" height="1.2"/><rect x="0" y="9" width="1.2" height="1.2"/><rect x="0" y="12" width="1.2" height="1.2"/><rect x="0" y="15" width="1.2" height="1.2"/><rect x="3" y="0" width="1.2" height="1.2"/><rect x="3" y="3" width="1.2" height="1.2"/><rect x="3" y="6" width="1.2" height="1.2"/><rect x="3" y="9" width="1.2" height="1.2"/><rect x="3" y="12" width="1.2" height="1.2"/><rect x="3" y="15" width="1.2" height="1.2"/></g></svg>
<svg class="abs" style="left:25.0px;top:134.0px;overflow:visible" width="24" height="24" viewBox="0 0 24 24"><g transform="translate(12 12.500)"><g id="sp" fill="#8fb0de" stroke="#4a7cc2" stroke-width="1.100"><rect x="-1.800" y="-11" width="3.600" height="22" rx="1.800"/><rect x="-1.800" y="-11" width="3.600" height="22" rx="1.800" transform="rotate(45)"/><rect x="-1.800" y="-11" width="3.600" height="22" rx="1.800" transform="rotate(90)"/><rect x="-1.800" y="-11" width="3.600" height="22" rx="1.800" transform="rotate(135)"/></g><circle r="6.300" fill="#8fb0de"/><circle r="2.200" fill="#fff" stroke="#4a7cc2" stroke-width="1.100"/></g></svg>
<span id="t14" class="t" style="left:12px;top:170.0px;font-size:12px;">Browser</span>
<svg class="abs" style="left:318px;top:171px" width="26" height="12" viewBox="0 0 26 12"><rect x="0.5" y="0.5" width="10" height="10" rx="2" fill="#f4f4f4" stroke="#6b6b6b"/><rect x="4.5" y="2.5" width="4" height="4" fill="#f4f4f4" stroke="#555" stroke-width="1"/><rect x="2.5" y="4.5" width="4" height="4" fill="#f4f4f4" stroke="#555" stroke-width="1"/><rect x="14.500" y="0.5" width="10" height="10" rx="2" fill="#f4f4f4" stroke="#6b6b6b"/><path d="M17 3l5 5M22 3l-5 5" stroke="#444" stroke-width="2.2"/></svg>
<svg class="abs" style="left:15.0px;top:192.0px;overflow:visible" width="18" height="18" viewBox="0 0 20 20"><rect x="2.500" y="2.500" width="12" height="12" fill="#f6f6f6" stroke="#6e6e6e" stroke-width="1.200"/><rect x="11" y="11.500" width="6.500" height="6.500" rx="2" fill="#5e9a5e" stroke="#3f7a3f" stroke-width=".6"/><circle cx="14.250" cy="14.750" r="1.500" fill="#cfe5cf"/></svg>
<svg class="abs" style="left:40.0px;top:192.0px;overflow:visible" width="18" height="18" viewBox="0 0 20 20"><path d="M3 9.500a7 7 0 0 1 11.500-5L16.500 2.500v6.500h-6.500l2.300-2.300A4.200 4.200 0 0 0 6 9.500z" fill="#6f9bd4" stroke="#3f6fb0" stroke-width=".6"/><path d="M17 10.500a7 7 0 0 1-11.500 5L3.500 17.500V11h6.500l-2.300 2.300a4.200 4.200 0 0 0 6.300-2.800z" fill="#6f9bd4" stroke="#3f6fb0" stroke-width=".6"/></svg>
<svg class="abs" style="left:65.0px;top:192.0px;overflow:visible" width="18" height="18" viewBox="0 0 20 20"><path d="M2.500 2.500h15v2.500l-5.500 6v6.500l-4-2V11L2.500 5z" fill="#6f97cb" stroke="#3f6aa6" stroke-width=".8" stroke-linejoin="round"/><path d="M3 3.600h14" stroke="#f4da3a" stroke-width="2"/></svg>
<svg class="abs" style="left:90.0px;top:192.0px;overflow:visible" width="18" height="18" viewBox="0 0 20 20"><path d="M3.500 2.500v14M3.500 7.500h3M3.500 14.500h3" fill="none" stroke="#999" stroke-width="1"/><path d="M2 2.500h7" stroke="#999" stroke-width="1"/><rect x="5.500" y="6" width="3" height="3" fill="#ffa520" stroke="#c97a08" stroke-width=".6"/><rect x="5.500" y="13" width="3" height="3" fill="#ffa520" stroke="#c97a08" stroke-width=".6"/><path d="M13 1.500l5 5.500h-3v9.500h-4V7H8z" fill="#4a7fc4" stroke="#274f8a" stroke-width=".8" stroke-linejoin="round"/></svg>
<svg class="abs" style="left:115.0px;top:192.0px;overflow:visible" width="18" height="18" viewBox="0 0 20 20"><circle cx="10" cy="10" r="7.800" fill="#6590cc" stroke="#4674b6" stroke-width=".8"/><text x="7.700" y="14.300" font-family="Liberation Serif" font-style="italic" font-weight="bold" font-size="12" fill="#fff">i</text></svg>
<div class="abs" style="left:8px;top:217px;width:337px;height:119px;background:#fff;border:1px solid #a3a3a3"></div>
<div class="abs" style="left:9px;top:218px;width:321px;height:103px;overflow:hidden">
<svg class="abs" style="left:46px;top:7px" width="8" height="5" viewBox="0 0 8 5"><path d="M0 0h8L4 4.500z" fill="#555"/></svg>
<svg class="abs" style="left:63.0px;top:1.0px;overflow:visible" width="16" height="16" viewBox="0 0 16 16"><path d="M1.500 2q0-1 1-1h4.800l1.400 1.500h5.300q1 0 1 1V6h-13.500z" fill="#8a8a8a" stroke="#8a8a8a" stroke-width="1"/><path d="M1.500 5.500h6l1.300-1.300h5.700v9.300q0 1-1 1h-11q-1 0-1-1z" fill="#f6f6f6" stroke="#8a8a8a" stroke-width="1"/></svg>
<span id="t15" class="t" style="left:85px;top:3.0px;font-size:12px;">spatial_data_viz</span>
<svg class="abs" style="left:68px;top:23px" width="5" height="9" viewBox="0 0 5 9"><path d="M0 0v9L5 4.500z" fill="#555"/></svg>
<svg class="abs" style="left:83.0px;top:19.0px;overflow:visible" width="16" height="16" viewBox="0 0 16 16"><path d="M1.500 3.500q0-1 1-1h4.500l1.500 1.500h5q1 0 1 1v8.500q0 1-1 1h-11q-1 0-1-1z" fill="#efefef" stroke="#8a8a8a" stroke-width="1"/></svg>
<span id="t16" class="t" style="left:105px;top:21.0px;font-size:12px;">imagery</span>
<svg class="abs" style="left:68px;top:41px" width="5" height="9" viewBox="0 0 5 9"><path d="M0 0v9L5 4.500z" fill="#555"/></svg>
<svg class="abs" style="left:83.0px;top:37.0px;overflow:visible" width="16" height="16" viewBox="0 0 16 16"><path d="M1.500 2q0-1 1-1h4.800l1.400 1.500h5.300q1 0 1 1V6h-13.500z" fill="#8a8a8a" stroke="#8a8a8a" stroke-width="1"/><path d="M1.500 5.500h6l1.300-1.300h5.700v9.300q0 1-1 1h-11q-1 0-1-1z" fill="#f6f6f6" stroke="#8a8a8a" stroke-width="1"/></svg>
<span id="t17" class="t" style="left:105px;top:39.0px;font-size:12px;">solutions</span>
<svg class="abs" style="left:83.0px;top:55.0px;overflow:visible" width="16" height="16" viewBox="0 0 16 16"><rect x="1.500" y="1" width="13" height="14.500" rx="1.200" fill="#f2f2f2" stroke="#8a8a8a" stroke-width="1"/><path d="M3.500 3.500h3.500M9 3.500h3.500" stroke="#8a8a8a" stroke-width="1.400"/><path d="M3.500 6.500h3.500M9 6.500h3.500M3.500 9.500h3.500M9 9.500h3.500M3.500 12.500h3.500M9 12.500h3.500" stroke="#a0a0a0" stroke-width="1.100"/></svg>
<span id="t18" class="t" style="left:105px;top:57.0px;font-size:12px;">bangalore-wards-2019-3-OnlyWeekdays-</span>
<svg class="abs" style="left:83.0px;top:73.0px;overflow:visible" width="16" height="16" viewBox="0 0 16 16"><defs><linearGradient id="pg" x1="0" y1="0" x2="0" y2="1"><stop offset="0" stop-color="#fff"/><stop offset="1" stop-color="#a9c6e6"/></linearGradient></defs><path d="M1 6q0-3 3-3 2 0 4 1 2-1 4.500-1 3 0 3 3 0 3.500-2.500 4.500-2 0-4.500-1.500Q5.500 11 3 12.500 1 11 1 6z" fill="url(#pg)" stroke="#4a6a94" stroke-width="1"/></svg>
<span id="t19" class="t" style="left:105px;top:75.0px;font-size:12px;">bangalore.geojson</span>
<svg class="abs" style="left:83.0px;top:91.0px;overflow:visible" width="16" height="16" viewBox="0 0 16 16"><defs><linearGradient id="pg" x1="0" y1="0" x2="0" y2="1"><stop offset="0" stop-color="#fff"/><stop offset="1" stop-color="#a9c6e6"/></linearGradient></defs><path d="M1 6q0-3 3-3 2 0 4 1 2-1 4.500-1 3 0 3 3 0 3.500-2.500 4.500-2 0-4.500-1.500Q5.500 11 3 12.500 1 11 1 6z" fill="url(#pg)" stroke="#4a6a94" stroke-width="1"/></svg>
<span id="t20" class="t" style="left:105px;top:93.0px;font-size:12px;">bangalore_wards.json</span>
</div>
<div class="abs sbv" style="left:330px;top:218px;height:103px"><div class="sbb" style="top:0"><svg width="8" height="5" viewBox="0 0 8 5" style="position:absolute;left:2px;top:3px"><path d="M0 4.500h8L4 0z" fill="#505050"/></svg></div><div class="sbt" style="top:27px;height:28px"></div><div class="sbb" style="bottom:0"><svg width="8" height="5" viewBox="0 0 8 5" style="position:absolute;left:2px;top:4px"><path d="M0 0h8L4 4.500z" fill="#505050"/></svg></div></div>
<div class="abs sbh" style="left:9px;top:321px;width:321px"><div class="sbb" style="left:0"><svg width="5" height="9" viewBox="0 0 5 9" style="position:absolute;left:4px;top:3px"><path d="M4.500 0.500v8L0 4.500z" fill="#505050"/></svg></div><div class="sbt2" style="left:13px;width:182px"></div><div class="sbb" style="right:0"><svg width="5" height="9" viewBox="0 0 5 9" style="position:absolute;left:5px;top:3px"><path d="M0 0.500v8L4.500 4.500z" fill="#505050"/></svg></div></div>
<div class="abs" style="left:330px;top:321px;width:14px;height:14px;background:#f0f0f0"></div>
<div class="abs" style="left:168px;top:338px;width:18px;height:2px;background:repeating-linear-gradient(90deg,#b0b0b0 0 1px,transparent 1px 3px)"></div>
<span id="t21" class="t" style="left:12px;top:345.0px;font-size:12px;">Layers</span>
<svg class="abs" style="left:318px;top:346px" width="26" height="12" viewBox="0 0 26 12"><rect x="0.5" y="0.5" width="10" height="10" rx="2" fill="#f4f4f4" stroke="#6b6b6b"/><rect x="4.5" y="2.5" width="4" height="4" fill="#f4f4f4" stroke="#555" stroke-width="1"/><rect x="2.5" y="4.5" width="4" height="4" fill="#f4f4f4" stroke="#555" stroke-width="1"/><rect x="14.500" y="0.5" width="10" height="10" rx="2" fill="#f4f4f4" stroke="#6b6b6b"/><path d="M17 3l5 5M22 3l-5 5" stroke="#444" stroke-width="2.2"/></svg>
<svg class="abs" style="left:15.0px;top:367.0px;overflow:visible" width="18" height="18" viewBox="0 0 20 20"><path d="M10 9.500L17 3.500" stroke="#c98a3a" stroke-width="2.600" stroke-linecap="round"/><path d="M3 9l6.500-3 3.500 6.500-6 4z" fill="#e8c070" stroke="#a87a28" stroke-width=".6"/><path d="M2 9.500l4-2 1.500 3-4 2z" fill="#d43030"/><path d="M3 12.500l4-2 1.500 3-3.500 2z" fill="#f0cf30"/><path d="M5 15.500l3.500-2 1.500 2.500-3 1.500z" fill="#3a6cc0"/></svg>
<svg class="abs" style="left:40.0px;top:367.0px;overflow:visible" width="18" height="18" viewBox="0 0 20 20"><rect x="3.500" y="6.500" width="9" height="10" fill="#f4f4f4" stroke="#6e6e6e"/><rect x="6.500" y="3.500" width="9" height="10" fill="#f4f4f4" stroke="#6e6e6e"/><path d="M9.500 11V2.500a1.500 1.500 0 0 1 3 0V9" fill="none" stroke="#3f6fb0" stroke-width="1.100"/><rect x="11" y="11.500" width="6.500" height="6.500" rx="2" fill="#5e9a5e" stroke="#3f7a3f" stroke-width=".6"/><circle cx="14.250" cy="14.750" r="1.500" fill="#cfe5cf"/></svg>
<svg class="abs" style="left:65.0px;top:367.0px;overflow:visible" width="18" height="18" viewBox="0 0 20 20"><path d="M1.500 9.500q7-7.500 15 0-8 7-15 0z" fill="#fff" stroke="#8a8a8a" stroke-width="1"/><path d="M1.500 8q7-6.500 15 0" fill="none" stroke="#aaa" stroke-width="1"/><circle cx="9" cy="9.500" r="3.300" fill="#5b88c4" stroke="#35609c" stroke-width=".6"/><circle cx="9" cy="9.500" r="1.300" fill="#1f2f45"/><path d="M13 15h6l-3 3z" fill="#444"/></svg>
<svg class="abs" style="left:90.0px;top:367.0px;overflow:visible" width="18" height="18" viewBox="0 0 20 20"><path d="M2.500 2.500h15v2.500l-5.500 6v6.500l-4-2V11L2.500 5z" fill="#6f97cb" stroke="#3f6aa6" stroke-width=".8" stroke-linejoin="round"/><path d="M3 3.600h14" stroke="#f4da3a" stroke-width="2"/></svg>
<svg class="abs" style="left:115.0px;top:367.0px;overflow:visible" width="18" height="18" viewBox="0 0 20 20"><path d="M8.500 3.800Q7 2 4.800 2.200 2.300 2.500 2.300 4.600 2.300 6.500 5 6.800 1.700 7.200 1.700 9.800 1.700 12.200 5 12.200 7.500 12.200 9 10" fill="none" stroke="#5c3566" stroke-width="1.700" stroke-linecap="round"/><path d="M10.500 11.500h8l-2.500 3v4h-3v-4z" fill="#bbb" stroke="#8a8a8a" stroke-width=".7"/></svg>
<svg class="abs" style="left:138px;top:375px" width="8" height="5" viewBox="0 0 8 5"><path d="M0.5 0.5h7L4 4.5z" fill="#404040"/></svg>
<svg class="abs" style="left:152.0px;top:367.0px;overflow:visible" width="18" height="18" viewBox="0 0 20 20"><path d="M3.500 2.500v14M3.500 7.500h3M3.500 14.500h3" fill="none" stroke="#999" stroke-width="1"/><path d="M2 2.500h7" stroke="#999" stroke-width="1"/><rect x="5.500" y="6" width="3" height="3" fill="#ffa520" stroke="#c97a08" stroke-width=".6"/><rect x="5.500" y="13" width="3" height="3" fill="#ffa520" stroke="#c97a08" stroke-width=".6"/><path d="M13 17l5-5.500h-3V2h-4v9.500H8z" fill="#4a7fc4" stroke="#274f8a" stroke-width=".8" stroke-linejoin="round"/></svg>
<svg class="abs" style="left:177.0px;top:367.0px;overflow:visible" width="18" height="18" viewBox="0 0 20 20"><path d="M3.500 2.500v14M3.500 7.500h3M3.500 14.500h3" fill="none" stroke="#999" stroke-width="1"/><path d="M2 2.500h7" stroke="#999" stroke-width="1"/><rect x="5.500" y="6" width="3" height="3" fill="#ffa520" stroke="#c97a08" stroke-width=".6"/><rect x="5.500" y="13" width="3" height="3" fill="#ffa520" stroke="#c97a08" stroke-width=".6"/><path d="M13 1.500l5 5.500h-3v9.500h-4V7H8z" fill="#4a7fc4" stroke="#274f8a" stroke-width=".8" stroke-linejoin="round"/></svg>
<svg class="abs" style="left:202.0px;top:367.0px;overflow:visible" width="18" height="18" viewBox="0 0 20 20"><rect x="2.500" y="2.500" width="12" height="12" fill="#f6f6f6" stroke="#6e6e6e" stroke-width="1.200"/><rect x="11" y="12" width="7" height="5" rx="1.500" fill="#e03030"/><path d="M12.500 14.500h4" stroke="#fff" stroke-width="1.300"/></svg>
<div class="abs" style="left:8px;top:392px;width:337px;height:310px;background:#fff;border:1px solid #a3a3a3"></div>
<div class="abs" style="left:9px;top:393px;width:335px;height:18px;background:#f0f0f0"></div>
<svg class="abs" style="left:32.5px;top:396px" width="13" height="13" viewBox="0 0 13 13"><rect x="0.5" y="0.5" width="12" height="12" fill="#fff" stroke="#b2b2b2"/><rect x="1.5" y="1.5" width="10" height="10" fill="none" stroke="#ececec"/><path d="M3 6.300l2.400 3.300 4.400-7" fill="none" stroke="#000" stroke-width="1.800"/></svg>
<div class="abs" style="left:52px;top:394px;width:16px;height:16px;background:#726bb8;border:1px solid #4f4a86"></div>
<span id="t22" class="t" style="left:74px;top:396.0px;font-size:12px;font-weight:bold;text-decoration:underline;">metro_station_buffer_reprojected</span>
<svg class="abs" style="left:32.5px;top:414px" width="13" height="13" viewBox="0 0 13 13"><rect x="0.5" y="0.5" width="12" height="12" fill="#fff" stroke="#b2b2b2"/><rect x="1.5" y="1.5" width="10" height="10" fill="none" stroke="#ececec"/><path d="M3 6.300l2.400 3.300 4.400-7" fill="none" stroke="#000" stroke-width="1.800"/></svg>
<div class="abs" style="left:52px;top:412px;width:16px;height:16px;background:#ff9e17;border:1px solid #b06c10"></div>
<span id="t23" class="t" style="left:74px;top:414.0px;font-size:12px;font-weight:bold;">30min_isochrone</span>
<svg class="abs" style="left:32.5px;top:432px" width="13" height="13" viewBox="0 0 13 13"><rect x="0.5" y="0.5" width="12" height="12" fill="#fff" stroke="#b2b2b2"/><rect x="1.5" y="1.5" width="10" height="10" fill="none" stroke="#ececec"/><path d="M3 6.300l2.400 3.300 4.400-7" fill="none" stroke="#000" stroke-width="1.800"/></svg>
<div class="abs" style="left:52px;top:430px;width:16px;height:16px;background:#e8714a;border:1px solid #a55034"></div>
<span id="t24" class="t" style="left:74px;top:432.0px;font-size:12px;font-weight:bold;">bangalore_wards_park_area</span>
<div class="abs" style="left:340px;top:394px;width:3px;height:16px;background:#e3e3e3"></div>
<div class="abs" style="left:340px;top:412px;width:3px;height:16px;background:#e3e3e3"></div>
<div class="abs" style="left:340px;top:430px;width:3px;height:16px;background:#e3e3e3"></div>
<div class="abs" style="left:351px;top:167px;width:330px;height:535px;background:#fff;border:1px solid #a0a0a0"></div>
<svg class="abs" style="left:352px;top:168px" width="328" height="533" viewBox="0 0 328 533"><defs><clipPath id="wc"><path d="M120.1 116.8L114.7 119.6L112.1 128.3L110.8 132.6L106.6 132.6L102.7 144.5L98.4 157.5L88.6 158.0L84.3 160.8L81.5 167.9L74.5 174.9L68.0 172.1L64.8 176.0L62.0 182.5L55.0 180.9L50.7 177.0L44.8 183.5L39.9 183.5L38.8 197.6L37.7 203.1L38.8 208.5L32.3 210.6L28.6 209.1L26.4 215.6L26.8 220.4L23.2 223.7L24.0 232.3L20.8 238.8L17.7 246.4L20.3 252.9L17.1 261.6L16.0 268.1L19.3 272.0L21.4 281.8L18.6 285.0L19.9 292.6L18.2 304.5L22.5 306.7L21.4 313.2L30.1 316.4L30.8 324.0L26.8 329.5L19.3 329.5L12.8 345.7L7.8 349.0L9.5 353.3L14.9 357.6L16.4 362.0L19.3 357.6L23.6 357.6L29.0 364.1L23.6 370.6L29.0 376.1L30.1 379.3L39.9 378.2L49.6 372.8L55.0 373.9L59.8 380.0L68.0 378.2L75.6 381.5L72.4 389.1L75.6 392.3L78.9 388.0L89.7 380.4L95.1 383.7L89.7 391.2L91.9 401.0L99.5 404.2L103.8 408.6L117.9 410.8L127.7 412.9L134.2 415.1L136.3 402.1L154.8 402.1L163.0 390.8L169.5 391.2L182.5 386.9L184.7 397.7L191.2 396.7L206.4 384.7L211.8 383.7L215.0 378.2L212.4 367.4L213.9 358.7L228.0 344.6L246.5 347.9L248.6 343.1L256.2 341.4L264.9 343.5L266.6 338.1L282.2 336.0L290.9 326.2L302.8 322.9L301.8 293.7L306.1 291.5L312.6 286.1L316.9 288.9L319.5 286.7L318.0 283.9L313.7 282.8L314.8 276.3L313.0 272.0L311.5 261.6L312.2 251.8L310.4 248.6L310.4 243.2L308.3 239.9L305.7 243.2L306.1 250.8L303.9 251.8L297.4 250.8L295.2 247.5L283.3 246.4L273.6 244.2L265.3 242.1L268.1 236.7L263.8 230.2L263.8 222.6L261.6 220.4L250.8 224.7L248.6 229.1L242.1 228.0L233.5 230.2L228.0 222.6L222.6 222.1L223.7 213.9L222.6 205.7L217.6 204.1L218.9 195.5L216.1 191.1L207.4 190.5L198.8 186.8L194.4 175.5L189.0 175.3L187.9 172.3L183.6 171.0L190.1 154.7L178.6 152.5L180.3 145.0L171.7 135.4L163.0 129.3L159.1 129.3L154.8 126.7L141.8 125.4L127.7 125.4L124.8 118.5Z"/></clipPath></defs><path d="M120.1 116.8L114.7 119.6L112.1 128.3L110.8 132.6L106.6 132.6L102.7 144.5L98.4 157.5L88.6 158.0L84.3 160.8L81.5 167.9L74.5 174.9L68.0 172.1L64.8 176.0L62.0 182.5L55.0 180.9L50.7 177.0L44.8 183.5L39.9 183.5L38.8 197.6L37.7 203.1L38.8 208.5L32.3 210.6L28.6 209.1L26.4 215.6L26.8 220.4L23.2 223.7L24.0 232.3L20.8 238.8L17.7 246.4L20.3 252.9L17.1 261.6L16.0 268.1L19.3 272.0L21.4 281.8L18.6 285.0L19.9 292.6L18.2 304.5L22.5 306.7L21.4 313.2L30.1 316.4L30.8 324.0L26.8 329.5L19.3 329.5L12.8 345.7L7.8 349.0L9.5 353.3L14.9 357.6L16.4 362.0L19.3 357.6L23.6 357.6L29.0 364.1L23.6 370.6L29.0 376.1L30.1 379.3L39.9 378.2L49.6 372.8L55.0 373.9L59.8 380.0L68.0 378.2L75.6 381.5L72.4 389.1L75.6 392.3L78.9 388.0L89.7 380.4L95.1 383.7L89.7 391.2L91.9 401.0L99.5 404.2L103.8 408.6L117.9 410.8L127.7 412.9L134.2 415.1L136.3 402.1L154.8 402.1L163.0 390.8L169.5 391.2L182.5 386.9L184.7 397.7L191.2 396.7L206.4 384.7L211.8 383.7L215.0 378.2L212.4 367.4L213.9 358.7L228.0 344.6L246.5 347.9L248.6 343.1L256.2 341.4L264.9 343.5L266.6 338.1L282.2 336.0L290.9 326.2L302.8 322.9L301.8 293.7L306.1 291.5L312.6 286.1L316.9 288.9L319.5 286.7L318.0 283.9L313.7 282.8L314.8 276.3L313.0 272.0L311.5 261.6L312.2 251.8L310.4 248.6L310.4 243.2L308.3 239.9L305.7 243.2L306.1 250.8L303.9 251.8L297.4 250.8L295.2 247.5L283.3 246.4L273.6 244.2L265.3 242.1L268.1 236.7L263.8 230.2L263.8 222.6L261.6 220.4L250.8 224.7L248.6 229.1L242.1 228.0L233.5 230.2L228.0 222.6L222.6 222.1L223.7 213.9L222.6 205.7L217.6 204.1L218.9 195.5L216.1 191.1L207.4 190.5L198.8 186.8L194.4 175.5L189.0 175.3L187.9 172.3L183.6 171.0L190.1 154.7L178.6 152.5L180.3 145.0L171.7 135.4L163.0 129.3L159.1 129.3L154.8 126.7L141.8 125.4L127.7 125.4L124.8 118.5Z" fill="#e8714a"/><g clip-path="url(#wc)" fill="none" stroke="#33221c" stroke-width="1.05" stroke-linejoin="miter"><path d="M12.7 321.0L15.7 317.0L11.0 310.1L22.4 309.4L19.5 303.1M19.5 303.1L17.5 299.1L13.1 297.5L8.7 296.0L5.0 293.6L4.2 288.4M46.2 202.9L38.4 204.1L43.8 210.6L40.3 213.6L40.1 217.9M46.2 202.9L50.2 201.4L54.5 201.6L58.7 201.8M58.7 201.8L60.0 206.3L62.8 210.0M62.8 210.0L61.8 214.6L57.9 217.0L55.6 220.7L52.8 223.9M52.8 223.9L49.0 221.1L45.0 218.4L40.1 217.9M25.1 223.0L25.1 223.0L25.1 223.0M25.1 223.0L29.8 224.4L32.3 219.5L36.1 218.4L40.1 217.9M25.1 223.0L22.8 218.9L19.8 215.2L17.7 211.0M29.3 188.1L31.7 192.2L39.9 189.7L41.8 194.3L45.7 196.6L46.2 202.9M6.4 239.2L12.0 238.1L15.0 233.9L16.7 228.4L21.9 226.8L25.1 223.0M-507.0 319.3L-501.8 316.1L-497.1 319.3L-492.3 323.3L-487.3 321.9L-482.5 325.2L-477.2 320.2L-472.4 323.9L-467.3 322.0L-462.4 322.8L-457.4 323.0L-452.5 324.3L-447.7 325.8L-442.5 323.5L-437.6 324.5L-432.6 323.8L-427.7 324.9L-422.6 323.0L-417.8 327.0L-412.8 326.7L-407.8 326.3L-402.8 325.9L-397.8 324.9L-392.8 324.6L-387.8 324.6L-382.9 325.6L-378.1 329.3L-373.1 328.7L-367.9 325.2L-363.0 326.5L-358.4 331.5L-353.4 332.4L-348.4 331.1L-343.6 334.0L-338.3 328.6L-333.4 331.2L-328.3 329.3L-323.7 335.5L-318.6 332.1L-313.6 332.4L-308.6 332.7L-303.5 330.8L-298.7 332.4L-293.4 328.2L-288.7 332.3L-283.6 331.4L-278.9 335.4L-274.0 336.8L-268.9 335.0L-263.8 332.7L-258.8 332.8L-254.1 336.9L-249.0 335.2L-244.1 335.5L-239.0 334.1L-234.2 337.1L-229.2 337.4L-224.4 338.9L-219.2 335.7L-214.3 337.8L-209.2 335.3L-204.4 339.0L-199.4 338.9L-194.4 338.4L-189.6 341.3L-184.4 337.2L-179.8 343.3L-174.7 341.2L-169.8 341.9L-164.8 341.6L-159.7 339.9L-154.7 340.5L-150.0 343.9L-144.9 342.3L-140.0 343.3L-134.9 342.2L-130.1 345.0L-125.1 344.9L-119.9 341.2L-115.4 348.2L-110.3 346.6L-105.3 346.5L-100.3 345.8L-95.3 345.3L-90.4 347.5L-85.7 351.3L-80.4 346.2L-75.3 344.5L-70.5 346.9L-65.5 347.5L-60.7 349.6L-55.4 345.4L-50.6 347.4L-45.6 347.9L-40.8 350.8L-35.9 351.4L-30.8 349.9L-26.0 352.0L-20.9 350.3L-15.9 350.6L-10.6 346.1L-5.9 349.2L-0.9 349.1L3.9 352.6L8.9 352.1L14.0 350.1L18.8 352.5M12.7 321.0L14.7 324.6L17.2 328.0L18.4 332.1L22.2 334.6L23.6 338.7M18.8 352.5L19.2 347.5L24.3 344.1L23.6 338.7M122.0 134.4L122.1 139.0L119.1 143.3L122.5 148.1L120.7 152.6L120.5 157.1L119.5 161.6M112.4 168.0L115.2 163.9L119.5 161.6M122.0 134.4L118.3 132.2L114.0 131.7M112.4 168.0L107.6 170.0L103.7 166.2L98.7 170.3L94.9 165.4M94.9 165.4L94.4 160.9L91.4 157.6L91.5 152.8L87.5 149.9M87.5 149.9L93.6 150.8L94.3 143.7L98.9 142.2L101.2 137.4L105.9 136.2L110.3 134.5L114.0 131.7M166.0 83.8L162.8 87.3L158.6 89.9L156.0 93.9L152.3 96.8L151.8 102.6L147.4 105.1L146.2 110.2L141.8 112.7L142.7 119.6L135.7 119.7L132.4 123.1L130.1 127.4L127.0 130.9L123.4 134.0M122.0 134.4L122.6 133.9L123.4 134.0M114.0 131.7L110.0 128.6L107.0 124.7L105.3 119.8L102.7 115.6L98.2 112.8L95.7 108.6L93.5 104.1L88.5 101.8L88.5 95.5L83.9 92.9M96.4 188.8L98.3 183.5L93.6 181.6L90.2 179.0L89.3 175.1M96.4 188.8L92.8 190.9L88.5 191.7L85.1 194.0L83.4 198.5M89.3 175.1L85.3 178.9L79.8 176.7L75.6 179.9L70.8 180.5L65.9 180.8M83.4 198.5L80.4 195.2L77.3 191.9L72.9 190.4L68.7 188.4L66.4 184.3M65.9 180.8L66.3 182.5L66.4 184.3M112.4 168.0L114.5 172.3L110.0 177.1L113.4 181.2M99.8 189.9L101.6 185.1L107.3 186.6L110.1 183.6L113.4 181.2M99.8 189.9L98.1 189.3L96.4 188.8M94.9 165.4L94.4 169.4L91.8 172.3L89.3 175.1M225.4 376.8L220.9 377.4L216.4 377.7L211.9 377.1L207.4 376.3L202.9 377.3L198.4 375.5L193.9 374.8L189.4 376.2M179.1 401.1L179.8 396.5L183.9 393.4L184.4 388.7L185.0 384.1L188.6 380.7L189.4 376.2M67.7 230.2L64.6 233.8L65.8 238.7L64.0 242.8M64.0 242.8L60.8 245.1L57.0 244.1M53.7 226.5L58.0 229.2L62.5 230.8L67.7 230.2M53.7 226.5L54.0 230.5L51.5 233.4L50.1 236.8M57.0 244.1L55.2 241.3L50.2 241.4L50.1 236.8M53.7 226.5L53.5 225.1L52.8 223.9M25.1 223.0L25.8 227.2L27.5 230.9L28.2 235.1L34.6 236.2L34.7 240.8M50.1 236.8L45.8 236.0L41.3 234.4L39.6 244.2L34.7 240.8M18.0 257.2L19.7 257.6L21.2 258.3M21.2 258.3L25.0 255.7L25.4 250.5L26.3 245.7L32.4 244.8L34.6 241.0M34.7 240.8L34.6 240.9L34.6 241.0M70.7 228.7L69.4 229.7L67.7 230.2M62.8 210.0L66.8 212.1L71.1 213.7M70.7 228.7L72.8 226.6L73.7 223.8M73.7 223.8L74.2 220.1L72.5 216.9L71.1 213.7M58.7 201.8L58.3 196.4L61.9 192.8L60.3 186.8L66.4 184.3M83.4 198.5L84.8 202.0L84.1 205.7M71.1 213.7L74.5 211.9L78.2 210.6L80.8 207.6L84.1 205.7M65.9 180.8L63.6 178.0L59.0 176.9L58.9 172.2M99.8 189.9L103.1 192.6L104.5 196.2L104.4 200.4M120.9 187.8L116.6 185.1L113.4 181.2M121.1 198.1L119.4 199.8L117.1 200.8M120.9 187.8L118.1 191.3L119.8 194.7L121.1 198.1M117.1 200.8L112.8 202.4L108.6 201.7L104.4 200.4M93.6 208.2L96.5 205.2L99.9 202.9L103.8 201.6M93.6 208.2L90.2 208.4L86.9 207.7M86.9 207.7L85.0 207.4L84.1 205.7M104.4 200.4L103.9 200.9L103.8 201.6M93.6 208.2L95.2 211.6L97.5 214.5L100.4 216.9M103.8 201.6L104.9 206.1L105.5 210.8L107.5 215.2M100.4 216.9L103.9 215.7L107.5 215.2M115.3 213.9L112.5 209.1L116.7 205.2L117.1 200.8M115.3 213.9L112.6 215.0L109.8 216.1M109.8 216.1L108.5 216.0L107.5 215.2M187.6 371.7L181.7 373.7L181.3 365.7L175.5 367.4L172.7 363.9L168.5 362.8L165.6 359.4M165.6 359.4L160.4 359.0L160.5 366.5L154.3 364.6L154.9 372.8L148.6 370.8M189.4 376.2L189.0 373.8L187.6 371.7M148.6 370.8L151.4 374.3L156.4 376.9L153.9 382.7L155.9 386.6L160.5 389.4L158.7 395.0L161.0 398.7M108.7 401.5L112.7 399.9L117.2 399.2L121.0 397.0M77.8 492.6L76.6 487.1L79.3 482.9L80.5 478.2L84.1 474.4L84.4 469.4L85.0 464.6L91.1 461.6L89.0 455.8L93.7 452.3L94.7 447.6L93.3 442.0L92.7 436.7L98.1 433.5L100.6 429.2L103.1 425.0L103.1 420.0L104.7 415.4L104.3 410.2L105.6 405.6L108.7 401.5M121.0 397.0L121.7 404.6L127.4 403.1L133.5 400.8L135.6 405.7L139.2 408.1L143.3 409.4M123.4 134.0L129.1 133.1L131.5 137.9L134.5 141.7L137.3 145.9L141.3 148.1L147.1 146.9L150.6 149.9M173.5 133.1L171.8 137.6L169.8 141.8L166.7 145.5M150.6 149.9L154.8 149.1L159.1 149.3L162.1 144.5L166.7 145.5M71.3 386.2L69.0 382.3L66.4 378.7L64.1 374.8L62.7 370.6L65.1 364.5L60.0 362.0M60.0 362.0L55.2 359.2L50.9 360.3L47.3 367.2L42.5 363.8L37.5 360.2L33.7 364.8L29.7 367.6L25.1 366.7M19.6 390.9L21.8 386.3L21.2 381.1L22.0 376.2L24.4 371.6L25.1 366.7M108.7 401.5L105.8 397.9L101.5 396.0L98.3 392.9L93.6 391.5L91.4 387.0L88.1 384.0M88.1 384.0L83.7 383.2L79.7 385.0L75.6 386.1L71.3 386.2M18.8 352.5L23.1 354.8L20.0 360.4L25.8 362.1L25.1 366.7M147.6 260.9L146.6 264.4L146.8 268.0M143.8 269.5L145.2 268.6L146.8 268.0M139.6 268.1L141.5 269.3L143.8 269.5M147.6 260.9L145.8 259.2L143.4 258.6M139.6 268.1L138.5 266.4L137.7 264.6M143.4 258.6L143.0 263.9L137.7 264.6M141.3 253.4L139.0 253.3L137.9 251.3M141.3 253.4L143.0 255.7L143.4 258.6M135.5 263.7L136.7 263.8L137.7 264.6M135.5 263.7L135.7 259.5L138.3 255.3L134.9 251.3M134.9 251.3L136.4 251.6L137.9 251.3M129.6 254.7L127.0 256.9L123.1 257.3L121.4 260.7M129.6 254.7L130.3 259.6L130.4 264.5M130.4 264.5L130.0 264.8L129.7 265.1M129.7 265.1L125.8 263.1L121.7 261.7M121.7 261.7L121.3 261.3L121.4 260.7M73.7 223.8L76.9 225.6L80.0 227.1L83.7 225.4M86.9 207.7L88.1 212.5L86.5 217.6L88.4 222.3M83.7 225.4L86.2 224.1L88.4 222.3M112.1 233.2L114.8 233.5L117.4 234.1M119.8 231.3L118.8 232.8L117.4 234.1M112.1 233.2L111.4 231.8L110.1 230.9M117.7 226.6L119.2 228.8L119.8 231.3M117.7 226.6L114.4 226.1L111.3 224.7M111.3 224.7L110.1 227.6L110.1 230.9M120.7 220.0L118.4 223.0L117.7 226.6M119.6 216.2L119.4 218.3L120.7 220.0M119.6 216.2L117.3 215.4L115.3 213.9M109.8 216.1L111.2 219.6L110.1 223.2M111.3 224.7L110.9 223.8L110.1 223.2M42.7 263.4L45.6 267.8L43.8 272.3L43.3 276.8M42.7 263.4L37.8 263.6L33.2 259.4L28.2 262.4L23.3 262.1M23.2 272.4L21.6 268.9L23.2 265.5L23.3 262.1M23.2 272.4L24.8 277.1L31.9 276.2L32.9 281.6M32.9 281.6L35.5 278.2L40.4 279.8L43.3 276.8M4.2 288.4L8.1 285.3L10.4 280.4L15.3 278.4L19.4 275.6L23.2 272.4M21.2 258.3L22.8 259.9L23.3 262.1M33.4 299.9L32.1 295.4L36.0 290.7L33.6 286.2L32.9 281.6M33.4 300.0L33.4 299.9L33.4 299.9M19.5 303.1L24.1 302.0L28.5 300.0L33.4 300.0M43.3 276.8L45.8 278.0L48.6 278.9M33.4 299.9L36.9 296.2L42.3 296.6L46.0 293.4L50.3 291.5L54.8 290.1M48.6 278.9L51.1 282.4L54.2 285.6L54.8 290.1M63.1 297.6L62.6 298.4L62.8 299.3M63.1 297.6L58.7 295.3L57.1 290.7M45.8 317.0L49.5 313.7L50.7 308.1L57.3 307.6L59.1 302.5L62.8 299.3M33.4 300.0L35.6 303.6L37.6 307.3L40.3 310.6L43.0 313.8L45.8 317.0M57.1 290.7L56.0 290.3L54.8 290.1M148.6 370.8L146.5 370.0L144.3 369.6M121.0 397.0L121.3 392.6L122.8 388.6L124.1 384.4L124.4 380.0L127.0 376.3M144.3 369.6L140.4 372.3L134.7 370.5L132.4 377.4L127.0 376.3M253.5 351.6L257.3 347.5L253.3 342.5L256.0 338.3L255.2 333.6L255.3 329.1L256.1 324.7M229.7 357.8L228.2 353.5L227.7 348.6L222.2 347.1L220.0 343.3M220.0 343.3L222.4 339.2L224.1 334.6L231.0 333.3L232.1 328.3L232.6 323.1M232.6 323.1L237.7 324.3L241.9 321.3L245.8 316.6L251.2 319.4M256.1 324.7L254.0 321.7L251.2 319.4M295.9 334.4L290.9 333.4L289.4 329.1L287.3 325.4M287.3 325.4L282.9 323.4L278.3 326.4L273.9 326.5L269.4 329.3L265.1 323.5L260.6 324.0L256.1 324.7M187.6 371.7L188.1 367.2L191.2 363.7L189.0 358.2L191.8 354.5L195.4 351.1L196.6 346.8M196.6 346.8L201.6 347.2L205.6 344.2L209.5 340.6L214.7 341.8M214.7 341.8L217.5 342.2L220.0 343.3M173.2 326.4L167.9 325.6L164.1 330.2L158.9 329.8L154.3 331.5M173.2 326.4L175.9 329.3L179.9 330.4L182.5 333.5M182.5 333.5L182.8 335.0L183.2 336.5M183.2 336.5L182.2 342.4L177.0 343.9L172.6 346.3L168.3 348.7L165.6 352.9M165.6 352.9L164.7 347.7L159.0 346.2L157.6 341.3L153.7 338.4L151.1 334.5M151.1 334.5L152.4 332.7L154.3 331.5M165.6 359.4L164.9 356.2L165.6 352.9M196.6 346.8L193.1 344.4L189.9 341.7L185.6 340.3L183.2 336.5M154.3 331.5L160.3 327.6L155.3 322.3L157.3 317.9L156.0 313.1L157.2 308.7M173.2 326.4L176.7 322.9L170.0 319.8L172.8 316.4M172.8 316.4L168.5 315.1L165.1 312.2L162.1 308.5L157.2 308.7M119.5 161.6L124.0 163.8L129.2 164.4L131.2 171.2L136.4 171.9L141.4 173.1M150.6 149.9L149.7 154.6L148.1 159.2L146.6 163.7L144.3 168.0L143.0 172.6M141.4 173.1L142.1 172.5L143.0 172.6M120.9 187.8L124.8 186.4L128.0 183.5L132.6 183.9L136.1 181.5M141.4 173.1L139.3 175.7L139.0 179.5L136.1 181.5M223.7 233.9L218.6 231.7L213.9 233.2L209.3 236.9L204.3 235.4M223.7 233.9L226.3 235.2L227.9 237.7M227.9 237.7L227.2 242.6L224.7 246.8M224.7 246.8L220.2 247.0L215.6 246.0L212.0 251.0L207.4 249.9M207.4 249.9L203.6 246.7L201.4 242.2M204.3 235.4L202.6 237.2L201.5 239.4M201.5 239.4L201.5 240.8L201.4 242.2M287.3 325.4L286.6 320.8L286.0 316.3L285.1 311.9L288.7 306.9L286.6 302.5L284.3 298.2M330.3 305.2L326.2 303.3L324.2 298.2L321.1 294.6L315.8 294.4L311.8 292.2L307.2 291.0L304.1 287.4L300.2 285.1M284.3 298.2L288.2 295.2L293.4 293.6L294.1 287.0L299.2 285.2M300.2 285.1L299.7 285.4L299.2 285.2M300.2 285.1L301.8 280.4L305.7 277.2L304.1 270.7L309.6 268.5L311.0 263.8L312.9 259.3L317.5 256.5L321.7 253.5L322.2 248.3M134.9 251.3L134.9 251.4L134.8 251.3M135.5 263.7L132.9 264.0L130.4 264.5M129.6 254.7L130.0 253.9L130.4 253.2M130.4 253.2L132.7 252.6L134.8 251.3M140.1 239.1L136.1 241.3L132.1 243.4M140.1 239.1L137.2 237.7L135.0 235.5M135.0 235.5L133.2 235.8L131.7 236.8M131.7 236.8L131.4 239.9L131.7 243.1M131.7 243.1L131.9 243.2L132.1 243.4M112.0 253.5L116.0 252.8L118.8 255.6M112.0 253.5L111.1 256.7L109.0 259.3M110.2 261.5L109.6 260.3L109.0 259.3M110.2 261.5L115.0 260.7L119.2 258.2M119.2 258.2L118.8 256.9L118.8 255.6M134.8 251.3L133.0 247.5L132.1 243.4M140.1 239.1L141.0 238.7L141.8 239.2M137.9 251.3L139.1 248.1L141.6 245.6L143.3 242.6M143.3 242.6L142.3 241.0L141.8 239.2M125.6 236.8L122.9 234.2L120.5 231.3M125.6 236.8L127.6 235.5L130.0 235.3M130.0 235.3L129.0 232.7L129.3 229.8M120.5 231.3L124.0 230.0L127.3 228.4M127.3 228.4L128.6 228.7L129.3 229.8M124.6 242.6L128.1 242.8L131.7 243.1M124.6 242.6L125.9 239.8L125.6 236.8M131.7 236.8L130.7 236.2L130.0 235.3M137.1 229.2L136.5 232.5L135.0 235.5M137.1 229.2L133.3 230.4L129.3 229.8M120.7 220.0L124.9 220.6L127.8 223.7M119.8 231.3L120.1 231.3L120.5 231.3M127.8 223.7L128.4 226.1L127.3 228.4M110.1 223.2L106.9 225.2L103.5 226.7M110.1 230.9L107.0 231.5L103.9 231.2M103.9 231.2L103.0 229.0L103.5 226.7M100.4 216.9L99.0 219.6L97.5 222.4M103.5 226.7L101.0 223.8L97.5 222.4M88.4 222.3L91.2 223.6L94.2 223.8M97.5 222.4L95.9 223.2L94.2 223.8M112.1 233.2L109.8 235.7L107.4 238.1M103.9 231.2L103.8 231.7L103.5 232.0M107.4 238.1L105.2 235.2L103.5 232.0M94.2 223.8L93.8 227.8L94.1 231.7L95.5 235.4M103.5 232.0L99.0 232.4L95.5 235.4M79.2 240.4L79.3 240.6L79.2 240.8M79.2 240.4L83.5 238.4L85.4 234.0M79.2 240.8L81.9 242.8L84.1 245.9L88.0 246.0M85.4 234.0L89.7 235.1L94.0 236.4M94.0 236.4L90.6 238.7L90.1 242.9L88.0 245.9M88.0 246.0L88.0 246.0L88.0 245.9M70.7 228.7L73.2 232.8L77.3 235.9L79.2 240.4M64.0 242.8L67.8 244.9L71.4 247.2M71.4 247.2L72.7 247.0L73.9 246.5M73.9 246.5L77.0 244.1L79.2 240.8M83.7 225.4L84.0 229.8L85.4 234.0M81.4 253.6L79.7 250.4L74.9 250.4L73.9 246.5M81.4 253.6L84.0 254.0L86.4 253.1M86.4 253.1L86.4 249.3L88.0 246.0M95.1 236.1L95.3 235.8L95.5 235.4M95.1 236.1L94.6 236.4L94.0 236.4M43.2 330.1L48.4 331.3L49.5 337.5L55.6 337.6L58.7 341.4L59.8 347.5L65.2 348.5M43.2 330.1L41.1 325.8L42.9 322.6L46.3 319.9M46.3 319.9L50.8 321.4L55.0 318.5L59.5 320.6L63.8 318.8L68.1 317.7L72.5 318.6M71.8 344.9L68.2 346.2L65.2 348.5M71.8 344.9L70.5 340.5L71.1 336.3L73.0 332.1L70.7 327.6L70.3 323.3L73.7 319.2M73.7 319.2L73.0 319.1L72.5 318.6M60.0 362.0L63.2 358.1L66.7 354.2L65.2 348.5M23.6 338.7L28.4 339.0L30.8 334.0L34.9 332.5L38.4 329.9L43.2 330.1M45.8 317.0L46.1 318.4L46.3 319.9M62.8 299.3L63.1 304.0L67.0 306.9L68.9 310.8L76.5 311.8L72.5 318.6M81.4 253.6L79.1 257.6L77.2 261.8M71.4 247.2L72.2 251.1L70.0 254.3L68.6 257.7M77.2 261.8L73.0 259.4L68.6 257.7M171.5 268.8L172.7 271.0L174.0 273.3M168.9 278.6L171.9 276.3L174.0 273.3M168.9 278.6L167.0 277.3L164.7 277.7M171.5 268.8L168.2 272.2L163.7 270.8M163.7 270.8L165.7 274.0L164.7 277.7M173.8 286.4L172.9 281.5L168.9 278.6M162.7 291.2L166.6 290.2L169.6 286.8L173.8 286.4M162.7 291.2L161.6 290.5L160.6 289.6M160.6 289.6L161.1 286.1L163.1 282.9L162.3 279.2M164.7 277.7L163.6 278.6L162.3 279.2M128.6 282.9L127.0 278.3L125.7 273.6M128.6 282.9L130.9 281.2L133.7 281.4M133.7 281.4L135.7 279.7L136.2 277.2M128.7 271.7L127.1 272.5L125.7 273.6M128.7 271.7L131.8 272.3L134.6 273.8M134.6 273.8L136.0 275.2L136.2 277.2M121.7 261.7L120.3 264.6L118.8 267.3M118.8 267.3L119.8 270.7L122.2 273.4M122.2 273.4L123.9 274.5L125.7 273.6M129.7 265.1L127.6 268.2L128.7 271.7M139.6 268.1L137.4 271.2L134.6 273.8M153.6 277.1L158.1 277.6L162.3 279.2M156.0 289.4L152.7 285.6L151.8 280.7M160.6 289.6L158.3 289.3L156.0 289.4M153.6 277.1L153.0 277.9L152.1 278.5M152.1 278.5L151.8 279.6L151.8 280.7M146.8 268.0L150.1 269.7L153.6 270.9M153.6 270.9L153.3 274.0L153.6 277.1M143.8 269.5L144.8 273.1L143.9 276.7M152.1 278.5L148.3 276.4L143.9 276.7M136.2 277.2L139.1 277.5L142.0 278.2M143.9 276.7L143.2 277.7L142.0 278.2M136.9 285.1L139.7 284.6L142.4 284.1M136.9 285.1L136.0 288.2L135.2 291.4M135.2 291.4L138.6 291.3L142.0 292.4L145.4 291.2M142.4 284.1L143.2 285.7L144.7 286.6M145.4 291.2L146.4 288.7L144.7 286.6M142.0 278.2L142.3 281.2L142.4 284.1M133.7 281.4L134.8 283.7L136.9 285.1M129.6 294.0L125.4 291.5L126.2 286.7M126.2 286.7L128.3 285.4L128.6 282.9M131.4 294.0L133.3 292.7L135.2 291.4M131.4 294.0L130.5 293.7L129.6 294.0M151.8 280.7L148.5 283.9L144.7 286.6M127.0 376.3L124.5 372.5L121.4 369.2L116.4 367.9L114.1 363.9M88.1 384.0L89.4 379.1L87.7 372.6L96.2 371.6L97.6 366.8M114.1 363.9L110.0 365.0L105.9 365.9L101.3 363.7L97.6 366.8M71.8 344.9L75.6 346.0L79.4 346.1L83.7 342.2L87.1 346.5M97.6 366.8L95.7 362.6L92.8 359.0L93.0 353.7L88.3 351.0L87.1 346.5M139.9 301.7L141.5 297.9L145.1 296.6L148.1 294.4M139.9 301.7L137.4 306.4L139.4 311.4M139.4 311.4L143.6 309.0L148.7 312.5L152.6 308.9L157.1 308.6M148.4 294.5L148.2 294.5L148.1 294.4M148.4 294.5L149.6 298.5L149.0 303.7L154.4 305.0L157.3 307.8M157.3 307.8L157.3 308.2L157.1 308.6M131.4 294.0L134.5 296.3L138.0 298.1L139.9 301.7M145.4 291.2L145.5 293.8L148.1 294.4M126.5 311.0L129.1 313.3L132.3 314.8M132.3 314.8L134.3 313.2L136.6 314.4M126.5 311.0L125.8 306.0L123.1 301.7M123.1 301.7L125.7 299.5L126.4 295.6L129.6 294.0M136.6 314.4L137.7 312.7L139.4 311.4M151.0 334.5L148.0 330.6L148.0 324.5L141.4 323.1L138.2 319.3L136.6 314.4M151.0 334.5L151.0 334.5L151.1 334.5M157.2 308.7L157.1 308.6L157.1 308.6M156.0 289.4L152.9 293.0L148.4 294.5M162.7 291.2L163.7 295.4L164.4 299.7M164.4 299.7L161.2 301.7L159.5 305.0L157.3 307.8M172.8 316.4L175.2 312.8L178.3 309.8M164.4 299.7L169.2 301.9L174.2 300.5M174.2 300.5L173.9 304.3L178.9 305.8L178.3 309.8M121.1 198.1L125.7 198.4L129.2 200.8L132.0 204.2M119.6 216.2L122.9 214.3L126.5 213.3L129.9 211.5M132.0 204.2L131.1 207.9L129.9 211.5M127.8 223.7L130.4 221.5L132.9 219.2M129.9 211.5L130.9 215.6L132.9 219.2M137.1 229.2L137.4 228.9L137.8 228.8M137.8 228.8L137.3 227.0L138.7 225.6M138.7 225.6L137.6 223.0L136.1 220.7M132.9 219.2L134.3 220.5L136.1 220.7M166.7 145.5L168.1 149.5L170.8 152.8L170.7 157.4L174.0 160.5L175.0 164.6M195.4 165.5L191.2 168.0L187.2 166.0L183.2 163.5L179.1 164.2L175.0 164.6M233.0 236.8L237.1 234.1L238.4 228.9L243.1 226.7L247.5 224.3L248.5 218.9M227.9 237.7L230.4 237.0L233.0 236.8M223.7 233.9L221.7 230.1L224.0 225.3L220.9 221.8L217.4 218.4L218.7 213.8M218.7 213.8L221.8 211.3L226.5 211.6L228.9 208.0M171.9 264.5L176.3 263.0L180.2 260.8M171.9 264.5L170.4 262.3L167.7 262.1M180.2 260.8L177.9 258.1L174.8 256.6L171.8 254.8M167.7 262.1L168.3 259.7L167.6 257.3M167.6 257.3L169.5 255.7L171.8 254.8M181.7 273.6L183.5 269.4L181.6 265.1L181.7 260.9M174.0 273.3L177.9 273.2L181.7 273.6M171.5 268.8L171.9 266.7L171.9 264.5M181.7 260.9L181.7 260.8L181.7 260.8M181.7 260.8L181.0 261.0L180.2 260.8M163.7 270.8L161.3 268.9L159.9 266.1M159.9 266.1L164.1 264.6L167.7 262.1M117.3 235.3L117.4 234.7L117.4 234.1M117.3 235.3L118.6 238.5L120.0 241.7M124.6 242.6L123.9 242.8L123.3 243.3M120.0 241.7L121.8 242.1L123.3 243.3M130.4 253.2L126.4 251.9L122.7 249.9M123.3 243.3L121.6 246.5L122.7 249.9M121.4 260.7L120.0 259.8L119.2 258.2M118.8 255.6L120.5 253.7L120.7 251.1M120.7 251.1L121.7 250.4L122.7 249.9M118.8 267.3L116.1 267.0L113.5 267.3M110.2 261.5L110.1 262.8L110.1 264.2M110.1 264.2L111.9 265.7L113.5 267.3M122.2 273.4L121.4 274.1L120.7 274.8M113.5 267.3L111.1 271.4L110.9 276.1M120.7 274.8L115.9 276.4L110.9 276.1M126.2 286.7L122.5 286.8L119.2 285.2M120.7 274.8L119.1 278.1L120.2 281.8L119.2 285.2M123.1 301.7L120.9 301.1L118.7 300.2M118.7 300.2L117.0 295.9L115.2 291.5L114.5 286.8M114.5 286.8L116.5 284.9L119.2 285.2M171.8 254.8L172.0 252.6L172.2 250.4M181.7 260.8L180.7 257.0L179.1 253.2L180.9 249.2M172.2 250.4L176.5 249.2L180.9 249.2M181.7 260.9L185.4 260.9L189.3 262.8L192.7 260.0M192.7 260.0L192.1 256.5L194.7 253.0L192.9 249.5M192.9 249.5L189.4 248.7L186.5 246.3L182.9 245.6M180.9 249.2L181.8 247.3L182.9 245.6M137.8 228.8L139.9 232.0L143.0 234.1M138.7 225.6L143.1 225.2L147.5 224.4M147.5 224.4L149.4 225.8L151.0 227.6M151.0 227.6L149.6 231.4L144.8 230.9L143.0 234.1M141.8 239.2L141.9 237.5L143.1 236.4M143.1 236.4L142.8 235.3L143.0 234.1M117.3 235.3L113.1 236.0L112.0 240.0L109.7 242.7M107.4 238.1L107.3 239.9L107.2 241.7M107.2 241.7L108.4 242.2L109.7 242.7M120.0 241.7L116.2 243.6L112.7 245.9M109.7 242.7L111.3 244.1L112.7 245.9M120.7 251.1L117.0 248.5L112.8 246.5M112.0 253.5L111.5 252.1L111.1 250.7M111.1 250.7L111.8 248.6L112.8 246.5M112.7 245.9L112.7 246.2L112.8 246.5M63.8 260.3L61.9 264.3L61.4 268.7M63.8 260.3L61.2 257.2L58.8 253.7L54.8 252.0M54.8 252.0L49.9 252.1L46.9 256.0M58.1 269.1L59.8 269.6L61.4 268.7M58.1 269.1L55.0 267.0L50.6 267.2L49.4 261.6L45.1 261.7M46.9 256.0L45.9 258.8L45.1 261.7M57.0 244.1L55.1 247.8L54.8 252.0M68.6 257.7L66.3 259.2L63.8 260.3M34.6 241.0L36.4 245.9L42.5 247.1L43.6 252.5L46.9 256.0M48.6 278.9L50.1 274.0L57.5 274.8L58.1 269.1M57.1 290.7L59.3 286.6L58.9 280.8L67.0 280.8L67.4 275.5M67.4 275.5L65.3 271.3L61.4 268.7M42.7 263.4L44.2 263.0L45.1 261.7M153.6 270.9L155.4 268.0L158.4 266.5M159.9 266.1L159.9 266.1L159.9 266.1M158.4 266.5L159.2 266.5L159.9 266.1M147.6 260.9L148.9 260.3L150.1 259.9M158.4 266.5L156.0 263.9L152.7 262.3L150.1 259.9M118.0 350.5L115.0 347.2L114.8 341.9L110.3 339.7M118.0 350.5L122.2 347.8L127.3 348.0L132.2 347.7L136.5 345.2M126.2 329.0L122.2 329.3L118.1 328.5L114.3 330.3M126.2 329.0L132.0 329.8L130.3 337.2L136.7 337.5L138.0 342.4M110.3 339.7L111.3 335.6L112.7 331.6M138.0 342.4L137.4 343.9L136.5 345.2M112.7 331.6L113.6 331.1L114.3 330.3M114.1 363.9L115.1 359.4L116.0 354.8L118.0 350.5M90.4 343.6L94.6 344.2L99.1 346.1L102.1 340.2L106.1 339.3L110.3 339.7M87.1 346.5L88.5 344.8L90.4 343.6M144.3 369.6L140.8 366.2L139.5 362.2L139.6 357.7L140.5 352.9L136.9 349.6L136.5 345.2M115.4 316.0L116.5 320.9L114.8 325.6L114.3 330.3M126.5 311.0L123.3 313.8L117.4 310.5L115.4 316.0M132.3 314.8L127.9 317.1L129.1 321.8L130.7 326.7L126.2 329.0M151.0 334.5L148.3 337.4L145.4 339.9L142.1 341.8L138.0 342.4M264.0 274.9L269.2 278.6L267.2 284.1L268.4 288.7L268.4 293.6M264.0 274.9L258.9 275.5L253.8 276.0L249.3 272.1L244.2 272.2M244.2 272.2L245.4 276.7L247.7 281.4L244.9 285.5L240.8 289.5L242.0 294.0M268.4 293.6L263.3 293.9L261.8 300.2L256.9 300.8L252.9 302.9M252.9 302.9L249.9 299.1L246.7 295.7L242.0 294.0M284.3 298.2L280.1 297.9L276.5 295.4L272.2 295.6L268.4 293.6M251.2 319.4L248.1 314.9L253.8 311.3L252.4 307.0L252.9 302.9M233.0 236.8L236.0 240.1L240.2 241.8L244.5 243.3L247.5 246.6L250.4 250.0M250.4 250.0L247.8 253.3L248.7 258.4L241.9 259.5L242.6 264.5M224.7 246.8L222.8 251.3L225.8 255.1M242.6 264.5L236.2 266.0L235.1 258.2L229.6 258.2L225.8 255.1M232.6 323.1L231.4 319.3L228.5 316.8L225.7 314.1L223.8 310.9M242.0 294.0L237.3 293.0L232.9 295.0L228.4 295.8M223.8 310.9L227.8 308.0L226.8 303.6L224.6 298.8L228.4 295.8M136.1 181.5L137.4 185.9L138.1 190.3L140.2 194.5L140.1 199.1M132.0 204.2L133.1 203.5L134.5 203.5M140.1 199.1L136.2 199.9L134.5 203.5M136.1 220.7L139.7 217.8L143.4 215.0M134.5 203.5L137.5 207.3L142.8 209.3L143.4 215.0M147.5 224.4L147.9 219.9L147.0 215.4M143.4 215.0L145.2 215.1L147.0 215.4M204.3 235.4L205.2 230.3L205.3 225.4L201.3 221.4M218.7 213.8L214.5 213.4L210.6 211.7M210.6 211.7L208.4 215.8L202.9 216.8L201.3 221.4M191.7 185.4L195.9 182.8L197.4 178.4L199.5 174.4M191.7 185.4L191.9 190.5L195.3 194.6L196.3 199.4M196.3 199.4L200.6 200.5L204.9 201.5M204.9 201.5L207.4 197.5L206.4 191.3L213.7 190.3L216.3 186.3L217.5 181.5M210.6 211.7L207.5 209.0L206.1 205.3L204.9 201.5M289.0 245.4L285.5 248.6L281.8 251.7L279.8 256.2L276.9 259.9M276.1 260.0L276.5 259.9L276.9 259.9M276.1 260.0L272.7 256.8L268.6 254.9L263.6 254.3L260.5 250.7L257.0 247.8M257.0 247.8L257.5 243.1L260.5 239.0L257.9 233.6L259.9 229.3L262.5 225.1M262.5 225.1L266.5 224.7L270.5 225.4L274.4 225.5M313.8 242.0L309.0 238.0L305.6 243.5L301.1 241.7L297.0 242.8L292.8 242.3L289.0 245.4M299.2 285.2L298.5 279.3L293.7 277.2L288.2 275.6L285.9 271.2L285.5 265.1L283.2 260.7L276.9 259.9M264.0 274.9L269.0 272.8L273.7 270.5L274.1 264.6L276.1 260.0M244.2 272.2L243.8 271.9L243.5 271.4M250.4 250.0L253.7 249.0L257.0 247.8M242.6 264.5L242.8 268.0L243.5 271.4M253.9 217.8L255.9 221.3L258.8 223.6L262.5 225.1M83.5 270.2L82.9 272.5L81.4 274.3M83.5 270.2L82.7 266.8L80.2 264.3M80.2 264.3L79.1 264.1L78.2 263.5M78.2 263.5L75.5 266.2L72.7 268.8L70.4 271.8L69.3 275.7M81.4 274.3L77.6 274.2L74.2 276.4L70.3 276.4M70.3 276.4L69.8 276.1L69.3 275.7M89.1 270.6L86.3 269.7L83.5 270.2M91.8 266.7L90.6 268.8L89.1 270.6M91.8 266.7L89.4 264.3L88.7 260.9M88.7 260.9L85.5 265.3L80.2 264.3M90.0 257.0L88.2 255.0L86.4 253.1M88.7 260.9L88.9 258.8L90.0 257.0M77.2 261.8L77.7 262.6L78.2 263.5M67.4 275.5L68.4 275.4L69.3 275.7M77.6 287.0L80.9 285.4L84.4 284.4L88.0 283.8M77.6 287.0L76.5 282.5L71.6 280.7L70.3 276.4M88.0 283.8L84.4 281.7L83.8 277.4L81.4 274.3M63.1 297.6L67.1 297.8L70.2 294.4L74.3 294.8M77.6 287.0L75.4 290.6L74.3 294.8M83.7 302.8L86.9 300.4L90.5 298.6L93.1 295.6M83.7 302.8L86.4 306.8L83.4 310.7L83.5 314.7M93.1 295.6L96.3 298.6L98.4 302.5L102.5 304.7L104.3 308.9M83.5 314.7L87.1 316.0L91.8 314.5L94.2 318.9M94.2 318.9L94.8 318.7L95.4 318.6M95.4 318.6L99.9 317.1L101.5 312.8L104.2 309.5M104.2 309.5L104.2 309.2L104.3 308.9M74.3 294.8L77.1 297.8L79.1 301.8L83.7 302.8M73.7 319.2L76.6 316.9L79.4 314.4L83.5 314.7M90.4 343.6L88.9 339.1L90.4 335.2L92.5 331.3L94.5 327.4L92.2 322.8L94.2 318.9M112.7 331.6L108.1 330.6L106.8 325.0L103.6 322.1L97.9 322.4L95.4 318.6M115.4 316.0L112.3 312.7L107.8 311.9L104.2 309.5M118.7 300.2L114.1 302.1L109.3 302.7M109.3 302.7L106.9 305.9L104.3 308.9M109.3 302.7L106.9 298.7L106.5 294.0M114.5 286.8L113.8 286.9L113.2 286.4M106.5 294.0L107.3 290.2L110.2 288.3L113.2 286.4M110.9 276.1L108.9 277.5L107.1 279.3M113.2 286.4L110.5 282.6L107.1 279.3M150.1 259.9L151.8 258.2L152.6 255.9M141.3 253.4L144.8 251.3L148.8 250.7M148.8 250.7L150.8 253.3L152.6 255.9M161.4 236.8L161.4 237.2L161.1 237.6M161.4 236.8L165.2 236.5L168.7 238.0M168.7 238.0L169.5 240.9L171.7 243.0M169.6 247.5L170.6 245.2L171.7 243.0M169.6 247.5L168.4 247.1L167.4 247.7M161.1 237.6L161.0 239.4L161.6 241.2M167.4 247.7L164.1 244.8L161.6 241.2M151.3 240.3L148.9 242.3L146.0 243.4M151.3 240.3L152.8 240.1L153.8 241.3M153.8 241.3L152.8 244.0L153.7 246.9M146.0 243.4L147.1 246.5L149.6 248.7M149.6 248.7L152.5 249.7L153.7 246.9M143.3 242.6L144.5 243.7L146.0 243.4M150.0 236.9L146.6 236.4L143.1 236.4M150.0 236.9L151.1 238.4L151.3 240.3M161.1 237.6L158.3 241.1L153.8 241.3M161.6 241.2L160.3 245.3L158.1 249.1M158.1 249.1L155.9 248.0L153.7 246.9M148.8 250.7L148.8 249.5L149.6 248.7M100.3 242.9L101.3 243.4L102.4 243.6M100.3 242.9L97.0 244.6L94.9 247.7M102.4 243.6L103.9 247.6L103.4 251.7M94.9 247.7L96.0 251.7L96.6 255.8M103.4 251.7L103.1 254.2L101.2 255.9M101.2 255.9L100.2 256.1L99.5 256.7M99.5 256.7L97.9 256.6L96.6 255.8M95.1 236.1L98.7 238.8L100.3 242.9M107.2 241.7L105.3 243.9L102.4 243.6M88.0 245.9L91.7 245.9L94.9 247.7M111.1 250.7L107.4 253.0L103.4 251.7M90.0 257.0L93.5 257.3L96.6 255.8M109.0 259.3L105.4 257.0L101.2 255.9M99.5 262.7L103.3 263.7L105.7 266.8M99.5 262.7L98.8 259.7L99.5 256.7M110.1 264.2L107.9 265.6L105.7 266.8M96.1 266.9L97.8 264.8L99.5 262.7M96.1 266.9L93.9 267.5L91.8 266.7M243.5 271.4L238.7 269.8L234.8 272.2L229.9 270.5L226.5 275.4M225.8 255.1L226.7 261.2L222.5 263.2L217.9 264.8M217.9 264.8L219.8 269.1L223.4 272.1L226.5 275.4M228.4 295.8L225.4 293.7L221.8 292.1L220.2 288.4M226.5 275.4L223.6 279.3L223.2 284.5L220.2 288.4M182.5 333.5L187.4 331.8L189.8 328.1L192.4 324.4L193.8 319.9M178.3 309.8L183.2 307.3L188.2 309.6M188.2 309.6L189.6 313.2L189.6 317.7L193.8 319.9M223.8 310.9L219.2 307.8L214.6 308.9L210.1 311.3M214.7 341.8L214.7 336.6L209.2 334.0L211.2 327.8L209.9 323.1L204.4 320.5M210.1 311.3L207.7 314.0L205.7 317.1L204.4 320.5M193.8 319.9L197.4 319.9L200.9 320.5L204.4 320.5M161.4 236.8L160.7 234.7L160.3 232.5M150.0 236.9L152.5 233.1L154.0 228.8M160.3 232.5L157.1 230.8L154.0 228.8M151.0 227.6L152.5 227.5L153.7 228.4M154.0 228.8L153.8 228.6L153.7 228.4M178.0 227.0L176.7 228.5L175.8 230.2M178.0 227.0L182.9 227.4L187.7 227.2M187.7 227.2L187.1 231.7L189.6 235.5M175.8 231.7L176.6 235.7L178.2 239.2L181.8 241.4M175.8 231.7L175.8 230.9L175.8 230.2M189.6 235.5L184.9 237.4L181.9 241.4M181.9 241.4L181.8 241.4L181.8 241.4M201.5 239.4L197.2 239.1L194.0 235.4L189.6 235.5M201.3 221.4L197.1 220.9L192.9 220.8M192.9 220.8L191.0 224.6L187.7 227.2M171.7 243.0L175.3 243.7L178.8 243.8L181.8 241.4M168.7 238.0L172.9 235.6L175.8 231.7M165.8 227.6L162.2 229.1L160.3 232.5M165.8 227.6L168.8 229.7L172.2 230.5L175.8 230.2M182.9 245.6L182.0 243.6L181.9 241.4M201.4 242.2L200.4 246.7L196.1 247.4L192.9 249.5M172.2 250.4L169.7 250.1L169.6 247.5M143.0 172.6L147.6 174.3L151.5 177.3M175.0 164.6L174.3 169.5L171.2 173.2M151.5 177.3L155.5 176.7L159.1 174.2L163.3 174.8L166.9 172.2L171.2 173.2M191.7 185.4L187.7 185.9L183.7 182.4L179.6 187.4L175.6 185.3M171.2 173.2L175.4 176.2L171.9 182.1L175.6 185.3M178.0 227.0L178.3 223.5L176.5 220.4L175.8 217.1M192.9 220.8L189.6 217.5L187.2 213.5M175.8 217.1L179.7 216.4L183.2 214.1L187.2 213.5M175.6 185.3L174.8 186.5L174.7 187.9M174.7 187.9L176.7 191.8L178.7 195.7L179.2 200.2M196.3 199.4L192.1 201.0L188.5 203.8M179.2 200.2L184.3 201.0L188.5 203.8M187.2 213.5L188.5 208.7L188.5 203.8M96.1 266.9L97.6 268.4L98.0 270.4M105.7 266.8L105.3 269.9L103.9 272.7M98.0 270.4L100.9 271.7L103.9 272.7M89.1 270.6L91.4 274.4L92.2 278.7M98.0 270.4L95.0 272.4L94.2 276.0L92.2 278.7M159.2 257.8L157.7 256.4L156.0 255.2M159.2 257.8L161.2 255.1L164.6 255.3M156.0 255.2L157.5 252.4L158.2 249.3M158.2 249.3L161.1 250.1L164.0 250.8M164.6 255.3L163.2 253.2L164.0 250.8M159.9 266.1L159.8 261.9L159.2 257.8M152.6 255.9L154.3 255.7L156.0 255.2M167.6 257.3L165.9 256.6L164.6 255.3M158.1 249.1L158.2 249.2L158.2 249.3M167.4 247.7L166.3 249.9L164.0 250.8M188.2 309.6L190.3 305.7L192.4 301.9M210.1 311.3L208.6 308.2L206.8 305.2L205.6 302.0M192.4 301.9L196.8 305.4L201.2 301.9L205.6 302.0M147.0 215.4L149.7 213.7L152.3 211.7M140.1 199.1L142.1 198.4L144.0 199.3M152.3 211.7L150.0 207.3L148.3 202.5L144.0 199.3M151.5 177.3L154.2 180.8L149.2 186.0L155.3 188.7L155.1 192.9M144.0 199.3L147.8 197.4L151.1 194.5L155.1 192.9M174.7 187.9L171.5 190.6L170.3 196.9L163.1 192.3L160.3 195.7M155.1 192.9L158.5 192.8L160.3 195.7M165.9 220.5L162.7 217.8L158.5 217.5M165.9 220.5L169.0 217.0L173.5 215.8M173.5 215.8L171.6 212.1L170.8 208.0M170.8 208.0L167.6 203.8L162.4 205.1M162.4 205.1L160.1 209.4L156.0 212.0M158.5 217.5L157.1 214.8L156.0 212.0M165.8 227.6L164.7 224.0L165.9 220.5M153.7 228.4L155.0 224.6L157.4 221.3L158.5 217.5M175.8 217.1L174.9 216.0L173.5 215.8M179.2 200.2L179.1 205.7L173.7 205.5L170.8 208.0M160.3 195.7L160.7 200.6L162.4 205.1M152.3 211.7L154.1 212.3L156.0 212.0M107.0 279.3L105.9 283.3L102.1 285.2L96.9 285.9L97.3 291.2M107.0 279.3L106.8 279.0L106.5 278.9M106.5 278.9L101.8 274.9L96.9 281.1L92.2 278.8M94.1 292.1L95.6 291.4L97.3 291.2M94.1 292.1L91.4 288.0L88.6 283.9M88.6 283.9L89.7 280.9L92.2 278.8M106.5 294.0L102.1 291.9L97.3 291.2M107.1 279.3L107.1 279.3L107.0 279.3M103.9 272.7L105.0 275.9L106.5 278.9M92.2 278.7L92.2 278.8L92.2 278.8M93.1 295.6L93.2 293.7L94.1 292.1M88.0 283.8L88.3 283.9L88.6 283.9M220.2 288.4L219.6 288.3L219.1 288.4M205.6 302.0L206.1 297.9L208.6 294.5M219.1 288.4L216.8 292.5L211.7 291.7L208.6 294.5M173.8 286.4L175.1 286.5L176.2 287.3M181.7 273.6L182.5 274.8L183.6 275.8M183.6 275.8L179.2 278.4L177.7 282.8L176.2 287.3M208.6 294.5L203.4 294.1L203.6 287.1L200.2 284.5L195.5 283.5M192.4 301.9L189.9 297.9L188.7 293.4M188.7 293.4L190.4 289.7L195.1 288.0L195.5 283.5M174.2 300.5L177.1 296.5L179.3 292.2M188.7 293.4L184.1 292.3L179.3 292.2M176.2 287.3L177.1 290.2L179.3 292.2M209.8 277.8L204.8 277.8L199.2 274.5L195.5 280.6M209.8 277.8L212.9 274.2L211.7 269.6L212.3 265.4M197.7 263.9L196.2 268.4L195.6 273.3L193.8 277.7M197.7 263.9L202.2 264.2L206.1 261.8M193.8 277.7L195.1 278.9L195.5 280.6M206.1 261.8L208.8 264.4L212.3 265.4M219.1 288.4L215.2 285.6L210.3 283.6L209.8 277.8M195.5 283.5L195.9 282.1L195.5 280.6M217.9 264.8L215.1 264.8L212.3 265.4M192.7 260.0L195.1 262.1L197.7 263.9M183.6 275.8L187.0 276.0L190.4 277.1L193.8 277.7M207.4 249.9L207.9 254.0L204.4 257.6L206.1 261.8"/></g><path d="M120.1 116.8L114.7 119.6L112.1 128.3L110.8 132.6L106.6 132.6L102.7 144.5L98.4 157.5L88.6 158.0L84.3 160.8L81.5 167.9L74.5 174.9L68.0 172.1L64.8 176.0L62.0 182.5L55.0 180.9L50.7 177.0L44.8 183.5L39.9 183.5L38.8 197.6L37.7 203.1L38.8 208.5L32.3 210.6L28.6 209.1L26.4 215.6L26.8 220.4L23.2 223.7L24.0 232.3L20.8 238.8L17.7 246.4L20.3 252.9L17.1 261.6L16.0 268.1L19.3 272.0L21.4 281.8L18.6 285.0L19.9 292.6L18.2 304.5L22.5 306.7L21.4 313.2L30.1 316.4L30.8 324.0L26.8 329.5L19.3 329.5L12.8 345.7L7.8 349.0L9.5 353.3L14.9 357.6L16.4 362.0L19.3 357.6L23.6 357.6L29.0 364.1L23.6 370.6L29.0 376.1L30.1 379.3L39.9 378.2L49.6 372.8L55.0 373.9L59.8 380.0L68.0 378.2L75.6 381.5L72.4 389.1L75.6 392.3L78.9 388.0L89.7 380.4L95.1 383.7L89.7 391.2L91.9 401.0L99.5 404.2L103.8 408.6L117.9 410.8L127.7 412.9L134.2 415.1L136.3 402.1L154.8 402.1L163.0 390.8L169.5 391.2L182.5 386.9L184.7 397.7L191.2 396.7L206.4 384.7L211.8 383.7L215.0 378.2L212.4 367.4L213.9 358.7L228.0 344.6L246.5 347.9L248.6 343.1L256.2 341.4L264.9 343.5L266.6 338.1L282.2 336.0L290.9 326.2L302.8 322.9L301.8 293.7L306.1 291.5L312.6 286.1L316.9 288.9L319.5 286.7L318.0 283.9L313.7 282.8L314.8 276.3L313.0 272.0L311.5 261.6L312.2 251.8L310.4 248.6L310.4 243.2L308.3 239.9L305.7 243.2L306.1 250.8L303.9 251.8L297.4 250.8L295.2 247.5L283.3 246.4L273.6 244.2L265.3 242.1L268.1 236.7L263.8 230.2L263.8 222.6L261.6 220.4L250.8 224.7L248.6 229.1L242.1 228.0L233.5 230.2L228.0 222.6L222.6 222.1L223.7 213.9L222.6 205.7L217.6 204.1L218.9 195.5L216.1 191.1L207.4 190.5L198.8 186.8L194.4 175.5L189.0 175.3L187.9 172.3L183.6 171.0L190.1 154.7L178.6 152.5L180.3 145.0L171.7 135.4L163.0 129.3L159.1 129.3L154.8 126.7L141.8 125.4L127.7 125.4L124.8 118.5Z" fill="none" stroke="#2a1d18" stroke-width="1.2" stroke-linejoin="round"/><path d="M84.3 312.1L96.2 309.9L98.4 313.2L104.9 309.9L109.2 307.8L109.2 298.0L113.6 300.2L126.6 292.6L130.9 290.4L141.8 293.7L147.2 289.3L152.6 290.4L153.7 295.8L150.4 304.5L171.7 347.9L163.0 358.7L156.9 380.4L147.2 384.7L137.4 378.2L130.9 384.7L136.3 390.2L130.9 404.2L127.7 412.9L117.9 410.8L124.4 392.3L115.7 389.1L114.0 380.4L120.1 375.0L120.1 370.6L110.3 367.4L109.2 373.9L96.2 373.9L93.0 363.1L96.2 350.0L91.9 343.5L87.6 334.9L88.6 329.5Z" fill="#ff9e17" stroke="#2e211c" stroke-width="1" stroke-linejoin="round"/><path d="M49.6 201.2L48.8 200.9L48.0 200.7L47.1 200.6L46.3 200.5L45.5 200.6L44.6 200.7L43.8 200.9L43.0 201.2L42.3 201.5L41.5 202.0L40.9 202.5L40.2 203.0L39.7 203.6L39.2 204.3L38.7 205.0L38.4 205.8L38.1 206.6L37.9 207.4L37.8 208.2L37.7 209.1L37.8 209.9L37.9 210.7L38.1 211.6L38.4 212.3L38.7 213.1L39.2 213.8L39.7 214.5L40.2 215.1L40.9 215.7L41.5 216.2L42.3 216.6L43.0 217.0L43.8 217.3L44.6 217.5L45.5 217.6L46.3 217.6L46.5 217.6L47.0 218.2L47.6 218.8L48.3 219.3L49.0 219.7L49.8 220.1L50.6 220.3L51.4 220.5L52.2 220.7L52.3 220.7L52.7 221.2L53.3 221.9L54.0 222.5L54.7 223.0L55.4 223.5L56.3 223.8L57.1 224.1L58.0 224.4L58.9 224.5L58.9 224.5L59.2 224.8L59.8 225.5L60.4 226.1L61.2 226.7L61.9 227.1L62.7 227.5L63.6 227.8L64.5 228.0L65.4 228.2L65.6 228.2L65.8 228.4L66.4 229.0L67.0 229.6L67.7 230.1L68.5 230.6L69.3 231.0L70.1 231.3L71.0 231.5L71.3 231.5L71.4 231.7L72.0 232.4L72.6 233.1L73.2 233.7L73.9 234.2L74.7 234.7L75.5 235.1L76.4 235.4L76.6 235.4L76.7 235.6L77.2 236.4L77.7 237.1L78.3 237.8L79.0 238.4L79.7 238.9L80.5 239.4L81.3 239.8L82.2 240.1L82.9 240.3L83.2 240.9L83.8 241.6L84.4 242.2L85.0 242.8L85.7 243.3L86.2 243.6L86.3 244.2L86.6 245.0L87.0 245.8L87.4 246.5L87.9 247.2L87.9 247.2L87.8 247.8L87.8 248.7L87.8 249.6L88.0 250.4L88.2 251.3L88.5 252.2L88.9 253.0L89.3 253.7L89.9 254.4L90.5 255.1L91.1 255.7L91.8 256.2L92.6 256.7L93.4 257.1L94.2 257.4L94.3 257.4L94.6 258.0L95.0 258.7L95.5 259.4L96.1 260.0L96.7 260.6L97.4 261.1L98.1 261.5L98.6 261.8L98.7 261.9L99.0 262.7L99.3 263.5L99.8 264.3L100.3 265.0L100.9 265.7L101.6 266.3L102.3 266.8L103.0 267.2L103.1 267.9L103.4 268.7L103.7 269.4L103.4 269.4L102.5 269.4L101.7 269.5L100.9 269.7L100.1 270.0L99.3 270.4L98.6 270.8L98.2 271.1L97.9 271.0L97.0 270.9L96.1 270.8L95.2 270.9L94.3 271.0L93.5 271.2L92.6 271.5L91.8 271.9L91.1 272.3L90.4 272.9L89.9 273.3L89.1 273.3L88.2 273.3L87.3 273.4L86.4 273.7L85.6 274.0L84.8 274.3L84.0 274.8L83.3 275.3L82.7 275.9L82.1 276.6L81.8 277.0L81.6 277.0L80.7 277.1L79.9 277.3L79.0 277.6L78.2 278.0L77.5 278.4L76.8 279.0L76.1 279.6L75.5 280.2L75.0 280.9L74.5 281.7L74.1 282.5L73.8 283.3L73.6 284.2L73.6 284.7L73.4 285.2L73.3 285.8L73.2 285.8L72.6 286.5L72.1 287.2L71.7 287.9L71.3 288.7L71.0 289.6L70.8 290.4L70.6 291.3L70.6 292.2L70.6 293.1L70.8 293.9L70.9 294.4L70.6 294.7L70.2 295.4L69.8 296.2L69.5 297.0L69.3 297.8L69.2 298.6L69.2 299.4L69.2 300.3L69.2 300.5L68.7 301.0L68.2 301.7L67.8 302.5L67.4 303.3L67.1 304.1L66.9 304.9L66.8 305.8L66.7 306.6L66.8 307.5L66.9 308.4L67.1 309.2L67.4 310.0L67.8 310.8L68.2 311.5L68.7 312.2L69.3 312.9L70.0 313.5L70.6 314.0L71.4 314.4L72.2 314.8L73.0 315.1L73.8 315.3L74.7 315.4L75.6 315.5L76.4 315.4L77.3 315.3L78.1 315.1L78.9 314.8L79.7 314.4L80.5 314.0L81.2 313.5L81.8 312.9L82.4 312.2L82.9 311.5L83.4 310.8L83.7 310.0L84.0 309.2L84.2 308.4L84.4 307.5L84.4 306.6L84.4 305.8L84.2 305.0L84.3 304.9L84.8 304.2L85.2 303.5L85.6 302.7L85.9 301.9L86.1 301.1L86.2 300.3L86.3 299.4L86.2 298.6L86.2 298.3L86.6 297.9L87.1 297.2L87.5 296.4L87.9 295.6L88.2 294.8L88.4 293.9L88.6 293.1L88.6 292.7L88.9 292.4L89.5 291.7L89.8 291.4L90.0 291.3L90.8 291.2L91.7 291.0L92.5 290.7L93.3 290.3L94.1 289.9L94.8 289.3L95.4 288.9L96.1 288.9L97.0 288.8L97.9 288.7L98.7 288.5L99.6 288.2L100.4 287.8L101.1 287.4L101.8 286.8L102.1 286.6L102.5 286.7L103.4 286.7L104.2 286.7L105.1 286.5L105.9 286.3L106.7 286.0L107.5 285.7L107.5 285.6L107.5 285.6L108.3 285.9L108.8 286.0L108.8 286.1L109.1 287.2L109.3 287.7L109.2 287.8L109.0 288.8L108.8 289.9L108.8 291.0L108.8 292.1L109.0 293.2L109.2 294.2L109.6 295.3L110.0 296.1L109.9 297.0L109.8 298.0L109.9 299.0L110.0 300.1L110.3 301.1L110.3 301.3L110.2 301.8L109.9 302.8L109.7 303.9L109.7 305.0L109.7 306.1L109.9 307.2L110.2 308.3L110.5 309.3L110.6 309.4L110.5 309.8L110.4 310.9L110.3 312.0L110.4 313.1L110.5 314.2L110.8 315.2L111.2 316.3L111.6 317.3L112.2 318.2L112.8 319.1L113.6 319.9L114.4 320.7L115.3 321.3L115.3 321.3L115.3 322.1L115.4 322.6L115.1 323.0L114.6 323.8L114.2 324.6L113.9 325.4L113.7 326.3L113.6 327.2L113.6 328.0L113.6 328.9L113.3 329.3L112.8 329.9L112.4 330.7L112.0 331.4L111.7 332.2L111.5 333.0L111.4 333.9L111.3 334.4L110.8 334.9L110.2 335.5L109.7 336.3L109.2 337.1L108.8 337.9L108.5 338.7L108.3 339.6L108.2 340.5L108.1 341.4L108.2 342.3L108.3 343.0L108.0 343.3L107.6 344.1L107.2 344.9L106.9 345.7L106.7 346.5L106.5 347.4L106.5 348.3L106.5 349.2L106.7 350.0L106.9 350.9L107.1 351.4L107.1 351.4L106.7 352.1L106.4 352.9L106.2 353.7L106.1 354.6L106.0 355.4L106.1 356.3L106.2 357.1L106.4 357.9L106.7 358.7L107.1 359.4L107.5 360.2L108.0 360.8L108.5 361.5L109.2 362.0L109.8 362.5L110.6 362.9L111.3 363.3L112.1 363.6L112.9 363.8L113.7 363.9L114.6 364.0L115.4 363.9L116.3 363.8L117.1 363.6L117.9 363.3L118.6 362.9L119.3 362.5L120.0 362.0L120.6 361.5L121.2 360.8L121.7 360.2L122.1 359.4L122.5 358.7L122.8 357.9L123.0 357.1L123.1 356.3L123.1 355.4L123.1 354.6L123.0 353.7L122.9 353.4L122.9 353.3L123.4 352.5L123.8 351.7L124.1 350.9L124.3 350.0L124.4 349.2L124.4 348.3L124.4 347.5L124.6 347.3L125.1 346.6L125.6 345.8L125.9 345.0L126.3 344.1L126.5 343.2L126.6 342.3L126.7 341.4L126.6 340.5L126.6 340.2L126.6 340.2L127.1 339.5L127.5 338.8L127.9 338.0L128.2 337.2L128.4 336.4L128.5 335.6L128.5 334.9L129.0 334.4L129.6 333.8L130.1 333.1L130.6 332.3L131.0 331.5L131.3 330.7L131.5 329.8L131.6 328.9L131.7 328.0L131.6 327.2L131.5 326.3L131.4 326.1L131.5 325.8L131.7 325.2L131.7 324.9L131.9 324.5L132.2 323.7L132.4 322.9L132.5 322.1L132.6 321.2L132.5 320.4L132.4 319.6L132.2 318.7L131.9 317.9L131.5 317.2L131.5 317.1L131.8 316.3L132.2 315.2L132.5 314.2L132.6 313.1L132.7 312.0L132.6 310.9L132.5 309.8L132.2 308.8L131.8 307.7L131.8 307.5L131.8 307.2L132.0 306.1L132.1 305.0L132.0 303.9L131.8 302.8L131.6 301.8L131.2 300.7L130.7 299.8L130.9 299.0L130.9 298.0L130.9 297.0L130.7 296.0L130.4 294.9L130.4 294.8L130.6 294.2L130.9 293.2L131.0 292.1L131.1 291.0L131.0 289.9L130.9 288.8L130.6 287.8L130.2 286.7L130.1 286.4L130.2 286.1L130.3 285.1L130.8 284.8L131.0 284.7L131.2 284.8L132.2 284.9L133.1 284.9L134.0 284.9L134.9 284.8L135.8 284.5L136.7 284.2L137.5 283.8L138.3 283.4L138.8 283.0L139.5 283.1L139.9 283.2L139.9 283.2L140.5 283.9L141.2 284.5L142.0 285.0L142.7 285.5L143.6 285.9L144.5 286.2L145.4 286.4L146.3 286.6L146.9 286.6L147.2 287.0L147.9 287.6L148.7 288.2L149.5 288.7L150.4 289.1L151.3 289.4L152.2 289.6L153.2 289.8L154.1 289.8L155.1 289.8L156.1 289.6L157.0 289.4L157.6 289.2L158.1 289.5L158.9 289.8L159.8 290.0L160.8 290.1L161.7 290.2L162.6 290.1L163.5 290.0L164.4 289.8L165.3 289.5L166.1 289.1L166.4 288.9L166.5 288.9L166.6 288.9L167.3 289.0L168.2 289.2L169.1 289.2L170.0 289.2L170.9 289.0L171.8 288.8L172.7 288.5L173.5 288.1L174.3 287.6L174.5 287.5L174.6 287.5L175.5 287.7L176.5 287.7L177.4 287.7L178.4 287.5L179.3 287.3L180.2 287.0L181.0 286.6L181.8 286.1L182.6 285.5L183.3 284.9L183.9 284.2L184.4 283.6L184.4 283.6L184.5 283.6L185.4 283.4L186.3 283.0L187.2 282.6L188.0 282.1L188.8 281.6L189.5 280.9L190.1 280.2L190.7 279.4L191.2 278.6L191.6 277.8L191.7 277.5L192.5 277.2L193.3 276.7L194.0 276.1L194.7 275.5L195.4 274.8L195.9 274.0L196.4 273.2L196.7 272.5L197.3 272.3L198.1 272.0L198.9 271.5L199.6 271.0L200.3 270.4L200.9 269.7L201.4 269.0L201.9 268.2L202.2 267.4L202.5 266.6L202.7 265.7L202.9 264.8L202.9 264.0L202.9 263.1L202.7 262.2L202.5 261.3L202.2 260.5L201.9 259.7L201.4 258.9L200.9 258.2L200.3 257.5L199.6 256.9L198.9 256.4L198.1 256.0L197.3 255.6L196.5 255.3L195.6 255.1L194.7 254.9L193.9 254.9L193.0 254.9L192.1 255.1L191.2 255.3L190.4 255.6L189.6 256.0L188.8 256.4L188.1 256.9L187.4 257.5L186.8 258.2L186.3 258.9L186.1 259.2L186.0 259.2L185.1 259.4L184.2 259.8L183.4 260.2L182.6 260.6L181.8 261.2L181.1 261.8L180.5 262.5L179.9 263.3L179.4 264.1L179.1 264.9L178.8 265.0L178.0 265.4L177.1 265.9L176.4 266.5L175.7 267.1L175.0 267.8L174.4 268.6L174.4 268.6L173.7 268.8L172.8 269.1L171.9 269.5L171.1 270.0L170.3 270.6L170.2 270.6L170.0 270.6L169.1 270.6L168.2 270.6L167.3 270.7L166.4 271.0L165.5 271.3L164.7 271.7L164.6 271.7L164.4 271.7L163.5 271.5L162.6 271.3L161.7 271.3L160.8 271.3L159.8 271.5L159.3 271.6L158.8 271.3L157.9 270.9L157.0 270.5L156.1 270.3L155.1 270.2L154.1 270.1L153.4 270.2L153.2 269.9L152.4 269.4L151.6 268.9L150.8 268.5L149.9 268.2L149.0 268.0L148.1 267.8L147.6 267.8L147.0 267.2L146.4 266.6L145.6 266.0L144.8 265.5L144.0 265.2L143.1 264.8L142.2 264.6L141.3 264.5L140.4 264.4L139.5 264.5L138.6 264.6L137.7 264.8L136.8 265.2L136.0 265.5L135.2 266.0L134.9 266.2L134.9 266.2L134.0 266.1L133.1 266.0L132.2 266.1L131.2 266.2L130.3 266.4L129.5 266.7L128.6 267.1L127.8 267.6L127.3 268.0L126.6 267.9L125.7 267.8L124.8 267.9L123.9 268.0L123.4 268.1L123.1 267.6L122.7 266.8L122.2 266.1L121.6 265.5L120.9 264.9L120.5 264.5L120.4 264.4L120.3 263.6L120.1 262.7L119.8 261.9L119.4 261.1L119.0 260.4L118.5 259.7L117.9 259.0L117.2 258.4L116.5 257.9L116.4 257.9L116.4 257.4L116.1 256.6L115.8 255.7L115.5 254.9L115.0 254.1L114.5 253.4L113.9 252.7L113.2 252.1L112.5 251.6L111.7 251.1L110.9 250.8L110.1 250.5L110.0 250.4L109.7 249.9L109.3 249.2L108.8 248.5L108.2 247.9L107.6 247.3L106.9 246.8L106.2 246.4L105.6 246.1L105.6 246.0L105.3 245.2L104.9 244.4L104.4 243.6L103.9 242.9L103.4 242.4L103.4 241.7L103.4 240.8L103.3 240.0L103.1 239.1L102.8 238.3L102.4 237.6L102.0 236.8L101.4 236.1L100.9 235.5L100.8 235.1L100.4 234.5L100.0 233.9L99.6 233.4L99.2 232.9L99.0 232.4L98.6 231.6L98.2 230.9L97.6 230.2L97.0 229.5L96.4 228.9L95.7 228.4L94.9 227.9L94.1 227.6L93.3 227.3L93.1 227.2L93.0 226.9L92.5 226.1L92.0 225.4L91.4 224.7L90.7 224.1L90.0 223.6L89.2 223.1L88.4 222.7L87.5 222.4L87.0 222.3L86.6 221.6L86.0 220.9L85.4 220.2L84.8 219.6L84.0 219.1L83.3 218.7L82.5 218.3L81.6 218.0L80.8 217.8L80.3 217.7L80.2 217.7L79.7 216.9L79.1 216.3L78.5 215.7L77.8 215.2L77.0 214.7L76.2 214.3L75.4 214.0L74.5 213.8L73.8 213.7L73.4 213.2L72.8 212.5L72.1 211.9L71.4 211.4L70.6 210.9L69.8 210.5L68.9 210.2L68.1 210.0L67.2 209.9L67.1 209.9L66.9 209.5L66.3 208.9L65.6 208.3L64.9 207.7L64.1 207.3L63.3 206.9L62.4 206.6L61.6 206.4L60.7 206.2L59.8 206.2L59.4 206.2L59.2 206.0L58.6 205.4L57.9 204.9L57.2 204.5L56.4 204.1L55.6 203.9L54.8 203.6L53.9 203.5L53.1 203.5L52.8 203.5L52.3 203.0L51.7 202.5L51.0 202.0L50.3 201.5L49.6 201.2Z" fill="#8a589f" fill-rule="evenodd" stroke="#3a2a40" stroke-width="0.7" stroke-linejoin="round"/></svg>
<div class="abs" style="left:347px;top:425px;width:2px;height:18px;background:repeating-linear-gradient(#b0b0b0 0 1px,transparent 1px 3px)"></div>
<div class="abs" style="left:683px;top:425px;width:2px;height:18px;background:repeating-linear-gradient(#b0b0b0 0 1px,transparent 1px 3px)"></div>
<span id="t25" class="t" style="left:691px;top:170.0px;font-size:12px;">Processing Toolbox</span>
<svg class="abs" style="left:900px;top:171px" width="26" height="12" viewBox="0 0 26 12"><rect x="0.5" y="0.5" width="10" height="10" rx="2" fill="#f4f4f4" stroke="#6b6b6b"/><rect x="4.5" y="2.5" width="4" height="4" fill="#f4f4f4" stroke="#555" stroke-width="1"/><rect x="2.5" y="4.5" width="4" height="4" fill="#f4f4f4" stroke="#555" stroke-width="1"/><rect x="14.500" y="0.5" width="10" height="10" rx="2" fill="#f4f4f4" stroke="#6b6b6b"/><path d="M17 3l5 5M22 3l-5 5" stroke="#444" stroke-width="2.2"/></svg>
<svg class="abs" style="left:695.0px;top:192.0px;overflow:visible" width="18" height="18" viewBox="0 0 20 20"><g transform="translate(6.500 6)"><g stroke="#d01818" stroke-width="2.200"><path d="M0-5.500v11M-5.500 0h11M-3.900-3.900l7.800 7.800M-3.900 3.900l7.800-7.800"/></g><circle r="3.400" fill="#d01818"/><circle r="1.300" fill="#f0f0f0"/></g><g transform="translate(12.500 10.500)"><g stroke="#6a6a6a" stroke-width="1.500"><path d="M0-3.800v7.600M-3.800 0h7.600M-2.700-2.700l5.400 5.400M-2.700 2.700l5.400-5.400"/></g><circle r="2.300" fill="#6a6a6a"/><circle r=".9" fill="#f0f0f0"/></g><g transform="translate(7 15)"><g stroke="#88a8e0" stroke-width="1.400"><path d="M0-3.300v6.600M-3.300 0h6.600M-2.300-2.300l4.600 4.600M-2.300 2.300l4.600-4.600"/></g><circle r="2" fill="#88a8e0"/><circle r=".8" fill="#f0f0f0"/></g><path d="M12.500 15.500h6l-3 3z" fill="#444"/></svg>
<svg class="abs" style="left:720.0px;top:192.0px;overflow:visible" width="18" height="18" viewBox="0 0 20 20"><path d="M9 1.500q-3.500 0-3.500 2.500v2.500H10v1H3.500Q1.500 7.500 1.500 10.500T3.500 13.500H5.500V11q0-2.500 2.500-2.500h4q2 0 2-2V4q0-2.500-3-2.500z" fill="#3776ab"/><circle cx="7.300" cy="3.600" r=".8" fill="#fff"/><path d="M10 17.500q3.500 0 3.500-2.500v-2.500H9v-1h6.500q2 0 2-3t-2-3H13.500V8q0 2.500-2.500 2.500H7q-2 0-2 2V15q0 2.500 3 2.500z" fill="#ffd43b"/><circle cx="11.700" cy="15.400" r=".8" fill="#fff"/><path d="M13 15.500h6l-3 3z" fill="#444"/></svg>
<svg class="abs" style="left:744.0px;top:192.0px;overflow:visible" width="18" height="18" viewBox="0 0 20 20"><circle cx="10" cy="10" r="7.800" fill="#fafafa" stroke="#777" stroke-width="1.100"/><path d="M10 4.500V10l3.500 2.500" fill="none" stroke="#777" stroke-width="1.200"/></svg>
<svg class="abs" style="left:769.0px;top:192.0px;overflow:visible" width="18" height="18" viewBox="0 0 20 20"><path d="M4.500 2.500h7l4 4v11h-11z" fill="#ececec" stroke="#aaa" stroke-width="1"/><path d="M11.500 2.500v4h4" fill="#ddd" stroke="#aaa"/><path d="M6.500 9.500h7M6.500 11.500h7M6.500 13.500h7M6.500 15.500h5" stroke="#999" stroke-width="1"/></svg>
<div class="abs" style="left:794px;top:196px;width:1px;height:11px;background:#cfcfcf"></div>
<svg class="abs" style="left:801.5px;top:192.5px;overflow:visible" width="17" height="17" viewBox="0 0 20 20"><rect x="2.500" y="3" width="11" height="11" rx="1.500" fill="#fbe04a" stroke="#d4b010" stroke-width=".8"/><path d="M17.500 4.500L10.500 15l-1 3.500 3-2 7-10.500z" fill="#f4d040" stroke="#8a7a28" stroke-width=".7"/><path d="M9.500 18.500l1-3.500 2 1.500z" fill="#555"/></svg>
<div class="abs" style="left:826px;top:196px;width:1px;height:11px;background:#cfcfcf"></div>
<svg class="abs" style="left:833.0px;top:192.0px;overflow:visible" width="18" height="18" viewBox="0 0 20 20"><path d="M8.500 8.500L17 17" stroke="#6a6048" stroke-width="3.800" stroke-linecap="round"/><path d="M9.500 9.500L17 17" stroke="#ead07a" stroke-width="2.200" stroke-linecap="round"/><path d="M4.300 2.800a4 4 0 1 0 5.800 1.400L7.700 6.400 5.600 5.800 5.200 3.700 7.500 1.700A4 4 0 0 0 4.300 2.800z" fill="#d5d5d5" stroke="#6a6a6a" stroke-width=".8"/></svg>
<div class="abs" style="left:688px;top:217px;width:240px;height:22px;background:#fff;border:1px solid #a9a9a9;border-radius:3px"></div>
<svg class="abs" style="left:692.0px;top:220.0px;overflow:visible" width="16" height="16" viewBox="0 0 16 16"><circle cx="6.500" cy="6.500" r="4.500" fill="none" stroke="#9a9a9a" stroke-width="1.300"/><path d="M9.800 9.800l4.200 4.200" stroke="#9a9a9a" stroke-width="1.500" stroke-linecap="round"/></svg>
<span id="t26" class="t" style="left:715px;top:222.0px;font-size:12px;">interse</span>
<svg class="abs" style="left:905px;top:223px" width="14" height="10" viewBox="0 0 14 10"><path d="M4 0h9.500v10H4L0 5z" fill="#9a9a9a"/><path d="M6.500 2.500l4 5M10.500 2.500l-4 5" stroke="#fff" stroke-width="1.300"/></svg>
<div class="abs" style="left:688px;top:239px;width:240px;height:463px;background:#fff;border:1px solid #a3a3a3"></div>
<svg class="abs" style="left:694px;top:247px" width="8" height="5" viewBox="0 0 8 5"><path d="M0 0h8L4 4.500z" fill="#555"/></svg>
<svg class="abs" style="left:711.0px;top:241.0px;overflow:visible" width="16" height="16" viewBox="0 0 16 16"><circle cx="7.300" cy="7.500" r="5" fill="#fff" stroke="#6fa52a" stroke-width="3"/><path d="M8 8l6 6" stroke="#6aa428" stroke-width="2.700" stroke-linecap="round"/><path d="M7.300 7.300l2.200 2.200" stroke="#ee8a2a" stroke-width="2.500" stroke-linecap="round"/></svg>
<span id="t27" class="t" style="left:733px;top:243.0px;font-size:12px;">Vector analysis</span>
<svg class="abs" style="left:731.0px;top:259.0px;overflow:visible" width="16" height="16" viewBox="0 0 16 16"><circle cx="9.500" cy="6.500" r="5.300" fill="#cbd7cb" stroke="#6e7e6e" stroke-width="1" stroke-dasharray="1 1.300"/><rect x="1.500" y="6.500" width="8.500" height="8.500" rx="1" fill="#cbd7cb" stroke="#6e7e6e" stroke-width="1" stroke-dasharray="1 1.300"/><path d="M5 6.800h5v5.200q-4.800-.5-5-5.200z" fill="#6b8aa8"/></svg>
<span id="t28" class="t" style="left:753px;top:261.0px;font-size:12px;">Overlap analysis</span>
<svg class="abs" style="left:694px;top:283px" width="8" height="5" viewBox="0 0 8 5"><path d="M0 0h8L4 4.500z" fill="#555"/></svg>
<svg class="abs" style="left:711.0px;top:277.0px;overflow:visible" width="16" height="16" viewBox="0 0 16 16"><circle cx="7.300" cy="7.500" r="5" fill="#fff" stroke="#6fa52a" stroke-width="3"/><path d="M8 8l6 6" stroke="#6aa428" stroke-width="2.700" stroke-linecap="round"/><path d="M7.300 7.300l2.200 2.200" stroke="#ee8a2a" stroke-width="2.500" stroke-linecap="round"/></svg>
<span id="t29" class="t" style="left:733px;top:279.0px;font-size:12px;">Vector general</span>
<svg class="abs" style="left:731.0px;top:295.0px;overflow:visible" width="16" height="16" viewBox="0 0 16 16"><g transform="translate(8 8)"><g stroke="#8fb0de" stroke-width="2.400" stroke-linecap="round"><path d="M0-6.300v12.600M-6.300 0h12.600M-4.500-4.500l9 9M-4.500 4.500l9-9"/></g><circle r="4" fill="#8fb0de" stroke="#6d96d0" stroke-width=".8"/><circle r="1.500" fill="#fff"/></g></svg>
<span id="t30" class="t" style="left:753px;top:297.0px;font-size:12px;">Join attributes by location</span>
<svg class="abs" style="left:731.0px;top:313.0px;overflow:visible" width="16" height="16" viewBox="0 0 16 16"><path d="M3 1.500h10v3h-1.200l-.4-1.400H6.200L9.600 8l-3.700 5h5.600l.6-1.700h1.200L13 14.500H3v-1.200L6.800 8 3 2.700z" fill="#6b8ba4"/></svg>
<span id="t31" class="t" style="left:753px;top:315.0px;font-size:12px;">Join attributes by location (su...</span>
<svg class="abs" style="left:694px;top:337px" width="8" height="5" viewBox="0 0 8 5"><path d="M0 0h8L4 4.500z" fill="#555"/></svg>
<svg class="abs" style="left:711.0px;top:331.0px;overflow:visible" width="16" height="16" viewBox="0 0 16 16"><circle cx="7.300" cy="7.500" r="5" fill="#fff" stroke="#6fa52a" stroke-width="3"/><path d="M8 8l6 6" stroke="#6aa428" stroke-width="2.700" stroke-linecap="round"/><path d="M7.300 7.300l2.200 2.200" stroke="#ee8a2a" stroke-width="2.500" stroke-linecap="round"/></svg>
<span id="t32" class="t" style="left:733px;top:333.0px;font-size:12px;">Vector overlay</span>
<svg class="abs" style="left:731.0px;top:349.0px;overflow:visible" width="16" height="16" viewBox="0 0 16 16"><circle cx="9.500" cy="6.500" r="5.300" fill="#cbd7cb" stroke="#6e7e6e" stroke-width="1" stroke-dasharray="1 1.300"/><rect x="1.500" y="6.500" width="8.500" height="8.500" rx="1" fill="#cbd7cb" stroke="#6e7e6e" stroke-width="1" stroke-dasharray="1 1.300"/><path d="M5 6.800h5v5.200q-4.800-.5-5-5.200z" fill="#6b8aa8"/></svg>
<span id="t33" class="t" style="left:753px;top:351.0px;font-size:12px;">Clip</span>
<svg class="abs" style="left:731.0px;top:367.0px;overflow:visible" width="16" height="16" viewBox="0 0 16 16"><g transform="translate(8 8)"><g stroke="#8fb0de" stroke-width="2.400" stroke-linecap="round"><path d="M0-6.300v12.600M-6.300 0h12.600M-4.500-4.500l9 9M-4.500 4.500l9-9"/></g><circle r="4" fill="#8fb0de" stroke="#6d96d0" stroke-width=".8"/><circle r="1.500" fill="#fff"/></g></svg>
<span id="t34" class="t" style="left:753px;top:369.0px;font-size:12px;">Extract/clip by extent</span>
<div class="abs" style="left:689px;top:384px;width:238px;height:18px;background:#3399ff"></div>
<div class="abs" style="left:729px;top:384px;width:21px;height:18px;background:#4ba4fc"></div>
<svg class="abs" style="left:731.0px;top:385.0px;overflow:visible" width="16" height="16" viewBox="0 0 16 16"><circle cx="9.500" cy="6.500" r="5.300" fill="#4a95e6" stroke="#3a7fd0" stroke-width="1" stroke-dasharray="1 1.300"/><rect x="1.500" y="6.500" width="8.500" height="8.500" rx="1" fill="#4a95e6" stroke="#3a7fd0" stroke-width="1" stroke-dasharray="1 1.300"/><path d="M5 6.800h5v5.200q-4.800-.5-5-5.200z" fill="#7c98b8"/></svg>
<span id="t35" class="t" style="left:753px;top:387.0px;font-size:12px;color:#fff;">Intersection</span>
<svg class="abs" style="left:731.0px;top:403.0px;overflow:visible" width="16" height="16" viewBox="0 0 16 16"><path d="M2.500 13.500L13.500 3M1.500 9.500l5 5.500M9 1.500l6 4.500" stroke="#6a6a6a" stroke-width="2" fill="none" stroke-linecap="round"/><rect x="9.800" y="3.300" width="3" height="3" fill="#86cc86" stroke="#4a8a4a" stroke-width=".5"/><rect x="3.600" y="9.600" width="3" height="3" fill="#86cc86" stroke="#4a8a4a" stroke-width=".5"/></svg>
<span id="t36" class="t" style="left:753px;top:405.0px;font-size:12px;">Line intersections</span>
<svg class="abs" style="left:694px;top:427px" width="8" height="5" viewBox="0 0 8 5"><path d="M0 0h8L4 4.500z" fill="#555"/></svg>
<svg class="abs" style="left:711.0px;top:421.0px;overflow:visible" width="16" height="16" viewBox="0 0 16 16"><circle cx="7.300" cy="7.500" r="5" fill="#fff" stroke="#6fa52a" stroke-width="3"/><path d="M8 8l6 6" stroke="#6aa428" stroke-width="2.700" stroke-linecap="round"/><path d="M7.300 7.300l2.200 2.200" stroke="#ee8a2a" stroke-width="2.500" stroke-linecap="round"/></svg>
<span id="t37" class="t" style="left:733px;top:423.0px;font-size:12px;">Vector selection</span>
<svg class="abs" style="left:731.0px;top:439.0px;overflow:visible" width="16" height="16" viewBox="0 0 16 16"><g transform="translate(8 8)"><g stroke="#8fb0de" stroke-width="2.400" stroke-linecap="round"><path d="M0-6.300v12.600M-6.300 0h12.600M-4.500-4.500l9 9M-4.500 4.500l9-9"/></g><circle r="4" fill="#8fb0de" stroke="#6d96d0" stroke-width=".8"/><circle r="1.500" fill="#fff"/></g></svg>
<span id="t38" class="t" style="left:753px;top:441.0px;font-size:12px;">Extract by location</span>
<svg class="abs" style="left:731.0px;top:457.0px;overflow:visible" width="16" height="16" viewBox="0 0 16 16"><rect x="1.500" y="1.500" width="9.500" height="9.500" rx="1" fill="#fbe04a" stroke="#d4b010" stroke-width=".8"/><path d="M13 9a2 2 0 0 1 2 2q0 1.500-2 4-2-2.500-2-4a2 2 0 0 1 2-2z" fill="#88a4bc" stroke="#5a7a98" stroke-width=".6"/><circle cx="13" cy="11" r=".8" fill="#fff"/></svg>
<span id="t39" class="t" style="left:753px;top:459.0px;font-size:12px;">Select by location</span>
<svg class="abs" style="left:694px;top:481px" width="8" height="5" viewBox="0 0 8 5"><path d="M0 0h8L4 4.500z" fill="#555"/></svg>
<svg class="abs" style="left:711.0px;top:475.0px;overflow:visible" width="16" height="16" viewBox="0 0 16 16"><path d="M14.100 8.900A6.550 6.550 0 1 1 11.300 2.950" fill="none" stroke="#1a5ba6" stroke-width="1.700"/><rect x="10.300" y="1.900" width="2.900" height="2.100" fill="#1a5ba6"/><path d="M5.200 8.900H14.800M2 6.400L10 13.900M7.400 4.500L11.300 8.700" stroke="#1a5ba6" stroke-width="1.400" fill="none"/><path d="M2.200 6.300L7.400 4.500" stroke="#1a5ba6" stroke-width="1" opacity=".35"/></svg>
<span id="t40" class="t" style="left:733px;top:477.0px;font-size:12px;">SAGA</span>
<svg class="abs" style="left:714px;top:497.5px" width="8" height="5" viewBox="0 0 8 5"><path d="M0 0h8L4 4.500z" fill="#555"/></svg>
<span id="t41" class="t" style="left:731px;top:493.0px;font-size:12px;">Raster calculus</span>
<svg class="abs" style="left:751.0px;top:508.0px;overflow:visible" width="16" height="16" viewBox="0 0 16 16"><path d="M14.100 8.900A6.550 6.550 0 1 1 11.300 2.950" fill="none" stroke="#1a5ba6" stroke-width="1.700"/><rect x="10.300" y="1.900" width="2.900" height="2.100" fill="#1a5ba6"/><path d="M5.200 8.900H14.800M2 6.400L10 13.900M7.400 4.500L11.300 8.700" stroke="#1a5ba6" stroke-width="1.400" fill="none"/><path d="M2.200 6.300L7.400 4.500" stroke="#1a5ba6" stroke-width="1" opacity=".35"/></svg>
<span id="t42" class="t" style="left:773px;top:510.0px;font-size:12px;">Fuzzy intersection (and)</span>
<svg class="abs" style="left:714px;top:530.5px" width="8" height="5" viewBox="0 0 8 5"><path d="M0 0h8L4 4.500z" fill="#555"/></svg>
<span id="t43" class="t" style="left:731px;top:526.0px;font-size:12px;">Vector line tools</span>
<svg class="abs" style="left:751.0px;top:541.0px;overflow:visible" width="16" height="16" viewBox="0 0 16 16"><path d="M14.100 8.900A6.550 6.550 0 1 1 11.300 2.950" fill="none" stroke="#1a5ba6" stroke-width="1.700"/><rect x="10.300" y="1.900" width="2.900" height="2.100" fill="#1a5ba6"/><path d="M5.200 8.900H14.800M2 6.400L10 13.900M7.400 4.500L11.300 8.700" stroke="#1a5ba6" stroke-width="1.400" fill="none"/><path d="M2.200 6.300L7.400 4.500" stroke="#1a5ba6" stroke-width="1" opacity=".35"/></svg>
<span id="t44" class="t" style="left:773px;top:543.0px;font-size:12px;">Line-polygon intersection</span>
<svg class="abs" style="left:714px;top:563.5px" width="8" height="5" viewBox="0 0 8 5"><path d="M0 0h8L4 4.500z" fill="#555"/></svg>
<span id="t45" class="t" style="left:731px;top:559.0px;font-size:12px;">Vector polygon tools</span>
<svg class="abs" style="left:751.0px;top:574.0px;overflow:visible" width="16" height="16" viewBox="0 0 16 16"><path d="M14.100 8.900A6.550 6.550 0 1 1 11.300 2.950" fill="none" stroke="#1a5ba6" stroke-width="1.700"/><rect x="10.300" y="1.900" width="2.900" height="2.100" fill="#1a5ba6"/><path d="M5.200 8.900H14.800M2 6.400L10 13.900M7.400 4.500L11.300 8.700" stroke="#1a5ba6" stroke-width="1.400" fill="none"/><path d="M2.200 6.300L7.400 4.500" stroke="#1a5ba6" stroke-width="1" opacity=".35"/></svg>
<span id="t46" class="t" style="left:773px;top:576.0px;font-size:12px;">Intersect</span>
<svg class="abs" style="left:751.0px;top:592.0px;overflow:visible" width="16" height="16" viewBox="0 0 16 16"><path d="M14.100 8.900A6.550 6.550 0 1 1 11.300 2.950" fill="none" stroke="#1a5ba6" stroke-width="1.700"/><rect x="10.300" y="1.900" width="2.900" height="2.100" fill="#1a5ba6"/><path d="M5.200 8.900H14.800M2 6.400L10 13.900M7.400 4.500L11.300 8.700" stroke="#1a5ba6" stroke-width="1.400" fill="none"/><path d="M2.200 6.300L7.400 4.500" stroke="#1a5ba6" stroke-width="1" opacity=".35"/></svg>
<span id="t47" class="t" style="left:773px;top:594.0px;font-size:12px;">Polygon self-intersection</span>
<svg class="abs" style="left:751.0px;top:610.0px;overflow:visible" width="16" height="16" viewBox="0 0 16 16"><path d="M14.100 8.900A6.550 6.550 0 1 1 11.300 2.950" fill="none" stroke="#1a5ba6" stroke-width="1.700"/><rect x="10.300" y="1.900" width="2.900" height="2.100" fill="#1a5ba6"/><path d="M5.200 8.900H14.800M2 6.400L10 13.900M7.400 4.500L11.300 8.700" stroke="#1a5ba6" stroke-width="1.400" fill="none"/><path d="M2.200 6.300L7.400 4.500" stroke="#1a5ba6" stroke-width="1" opacity=".35"/></svg>
<span id="t48" class="t" style="left:773px;top:612.0px;font-size:12px;">Polygon-line intersection</span>
<div class="abs" style="left:727px;top:380px;width:97px;height:24px;border:2px solid #ee0a0a"></div>
<div class="abs" style="left:8px;top:702px;width:919px;height:28px;background:#f0f0f0"></div>
<div class="abs" style="left:12px;top:705px;width:200px;height:22px;background:#fff;border:1px solid #a9a9a9;border-radius:3px"></div>
<svg class="abs" style="left:19.5px;top:708.5px;overflow:visible" width="15" height="15" viewBox="0 0 16 16"><circle cx="6.500" cy="6.500" r="4.500" fill="none" stroke="#9a9a9a" stroke-width="1.300"/><path d="M9.800 9.800l4.200 4.200" stroke="#9a9a9a" stroke-width="1.500" stroke-linecap="round"/></svg>
<span id="t49" class="t" style="left:40px;top:709.5px;font-size:11px;color:#7a7a7a">Type to locate (Ctrl+K)</span>
<span id="t50" class="t" style="left:219px;top:709.5px;font-size:11px;">Reac</span>
<span id="t51" class="t" style="left:248px;top:709.5px;font-size:11px;">d</span>
<div class="abs" style="left:257px;top:706px;width:101px;height:21px;background:#fff;border:1px solid #a9a9a9;border-radius:3px"></div>
<span id="t52" class="t" style="left:269px;top:709.5px;font-size:11px;">77.791,13.205</span>
<svg class="abs" style="left:358.0px;top:706.0px;overflow:visible" width="20" height="20" viewBox="0 0 20 20"><path d="M4 3q3-2.500 7.500-1.500l3 9.500q-3.500 3-7.500 2z" fill="#fff" stroke="#222" stroke-width="1.300"/><path d="M6.500 2.500l2 5.500M9.500 1.800l1.800 5.500M4.800 8.800l9-2.800" stroke="#222" stroke-width="1.200" fill="none"/><path d="M6.500 3l1.500 4.500 2.500-.8L9 2.200z" fill="#222"/><circle cx="12.500" cy="14" r="3.300" fill="#fff" stroke="#222" stroke-width="1.200"/><circle cx="12.500" cy="14" r="1" fill="#222"/><path d="M14 3.500l2.500-2M16 6l2-1M3 13l-2 1M4 16l-1.500 2" stroke="#555" stroke-width=".8"/></svg>
<span id="t53" class="t" style="left:389px;top:709.5px;font-size:11px;">a</span>
<div class="abs" style="left:396px;top:706px;width:82px;height:21px;background:#fff;border:1px solid #a9a9a9;border-radius:3px"></div>
<span id="t54" class="t" style="left:401.5px;top:709.5px;font-size:11px;">1:371069</span>
<div class="abs" style="left:457px;top:707px;width:20px;height:19px;background:#f3f3f3;border-left:1px solid #c4c4c4;border-radius:0 2px 2px 0"></div>
<svg class="abs" style="left:463px;top:715px" width="8" height="5" viewBox="0 0 8 5"><path d="M0.5 0.5h7L4 4.5z" fill="#404040"/></svg>
<svg class="abs" style="left:487.0px;top:707.0px;overflow:visible" width="18" height="18" viewBox="0 0 18 18"><path d="M5.500 9V6.500a3.500 3.500 0 0 1 7 0V9" fill="none" stroke="#6e6e6e" stroke-width="2"/><rect x="3" y="8.500" width="12" height="8.500" rx="1.500" fill="#6e6e6e"/></svg>
<span id="t55" class="t" style="left:511px;top:709.5px;font-size:11px;">r</span>
<div class="abs" style="left:519px;top:706px;width:87px;height:20px;background:#fff;border:1px solid #a9a9a9;border-radius:3px"></div>
<span id="t56" class="t" style="left:523px;top:709.5px;font-size:11px;">100%</span>
<div class="abs" style="left:591px;top:707px;width:1px;height:18px;background:#c8c8c8"></div>
<svg class="abs" style="left:594px;top:710px" width="8" height="12" viewBox="0 0 8 12"><path d="M0 4.500h8L4 0.500zM0 7.500h8L4 11.500z" fill="#666"/></svg>
<span id="t57" class="t" style="left:614px;top:709.5px;font-size:11px;">a</span>
<div class="abs" style="left:628px;top:706px;width:84px;height:20px;background:#fff;border:1px solid #a9a9a9;border-radius:3px"></div>
<span id="t58" class="t" style="left:632px;top:709.5px;font-size:11px;">0.0 °</span>
<div class="abs" style="left:697px;top:707px;width:1px;height:18px;background:#c8c8c8"></div>
<svg class="abs" style="left:700px;top:710px" width="8" height="12" viewBox="0 0 8 12"><path d="M0 4.500h8L4 0.500zM0 7.500h8L4 11.500z" fill="#666"/></svg>
<svg class="abs" style="left:718px;top:709.5px" width="13" height="13" viewBox="0 0 13 13"><rect x="0.5" y="0.5" width="12" height="12" fill="#fff" stroke="#b2b2b2"/><rect x="1.5" y="1.5" width="10" height="10" fill="none" stroke="#ececec"/><path d="M3 6.300l2.400 3.300 4.400-7" fill="none" stroke="#000" stroke-width="1.800"/></svg>
<span id="t59" class="t" style="left:736px;top:709.5px;font-size:11px;">Render</span>
<svg class="abs" style="left:788.0px;top:707.0px;overflow:visible" width="18" height="18" viewBox="0 0 18 18"><ellipse cx="9" cy="9" rx="7.500" ry="6.500" fill="#f4f4f4" stroke="#6e6e6e" stroke-width="1"/><path d="M9 2.500v13M1.500 9h15M2.500 5.800h13M2.500 12.200h13M9 2.500q-5 6.500 0 13M9 2.500q5 6.500 0 13" fill="none" stroke="#6e6e6e" stroke-width=".8"/></svg>
<span id="t60" class="t" style="left:808px;top:709.5px;font-size:11px;">EPSG:4326</span>
<svg class="abs" style="left:879.0px;top:706.0px;overflow:visible" width="20" height="20" viewBox="0 0 20 20"><path d="M10 2.500q8 0 8 6t-6.500 6.300q.5 2 2.500 2.700-3.500.3-5.200-2.800Q2 14.200 2 8.500t8-6z" fill="#6e6e6e"/><circle cx="6.300" cy="8.700" r="1.200" fill="#fff"/><circle cx="10" cy="8.700" r="1.200" fill="#fff"/><circle cx="13.700" cy="8.700" r="1.200" fill="#fff"/></svg>
<svg class="abs" style="left:914px;top:717px" width="12" height="12" viewBox="0 0 12 12"><g fill="#b8b8b8"><rect x="9" y="0" width="1.4" height="1.4"/><rect x="6" y="3" width="1.4" height="1.4"/><rect x="9" y="3" width="1.4" height="1.4"/><rect x="3" y="6" width="1.4" height="1.4"/><rect x="6" y="6" width="1.4" height="1.4"/><rect x="9" y="6" width="1.4" height="1.4"/><rect x="0" y="9" width="1.4" height="1.4"/><rect x="3" y="9" width="1.4" height="1.4"/><rect x="6" y="9" width="1.4" height="1.4"/><rect x="9" y="9" width="1.4" height="1.4"/></g></svg>
</body></html>
